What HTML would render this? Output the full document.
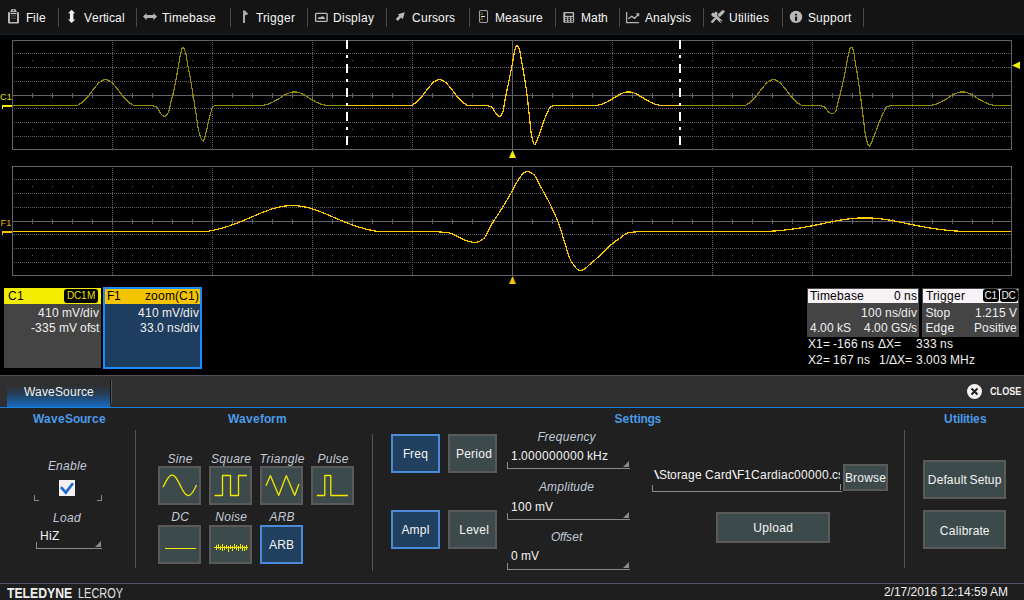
<!DOCTYPE html>
<html><head><meta charset="utf-8"><style>
*{margin:0;padding:0;box-sizing:border-box}
html,body{width:1024px;height:600px;overflow:hidden;background:#000;font-family:"Liberation Sans",sans-serif}
.a{position:absolute}
.t{position:absolute;white-space:nowrap}
i{font-style:inherit;display:inline-block}
.w1{width:1px}.w2{width:2px}.w3{width:3px}.w4{width:4px}.w5{width:5px}.w6{width:6px}.w7{width:7px}.w8{width:8px}.w9{width:9px}.w10{width:10px}.w11{width:11px}.w12{width:12px}.w13{width:13px}.w14{width:14px}.w15{width:15px}
</style></head><body>
<svg class="a" style="left:0;top:0" width="1024" height="290" viewBox="0 0 1024 290">
<g shape-rendering="crispEdges">
<line x1="13" y1="53.5" x2="1011" y2="53.5" stroke="#625f65" stroke-dasharray="1 1" stroke-dashoffset="1"/>
<line x1="13" y1="67.5" x2="1011" y2="67.5" stroke="#625f65" stroke-dasharray="1 1" stroke-dashoffset="1"/>
<line x1="13" y1="81.5" x2="1011" y2="81.5" stroke="#625f65" stroke-dasharray="1 1" stroke-dashoffset="1"/>
<line x1="13" y1="108.5" x2="1011" y2="108.5" stroke="#625f65" stroke-dasharray="1 1" stroke-dashoffset="1"/>
<line x1="13" y1="122.5" x2="1011" y2="122.5" stroke="#625f65" stroke-dasharray="1 1" stroke-dashoffset="1"/>
<line x1="13" y1="136.5" x2="1011" y2="136.5" stroke="#625f65" stroke-dasharray="1 1" stroke-dashoffset="1"/>
<line x1="112.5" y1="41" x2="112.5" y2="149" stroke="#625f65" stroke-dasharray="1 1" stroke-dashoffset="1"/>
<line x1="212.5" y1="41" x2="212.5" y2="149" stroke="#625f65" stroke-dasharray="1 1" stroke-dashoffset="1"/>
<line x1="312.5" y1="41" x2="312.5" y2="149" stroke="#625f65" stroke-dasharray="1 1" stroke-dashoffset="1"/>
<line x1="412.5" y1="41" x2="412.5" y2="149" stroke="#625f65" stroke-dasharray="1 1" stroke-dashoffset="1"/>
<line x1="612.5" y1="41" x2="612.5" y2="149" stroke="#625f65" stroke-dasharray="1 1" stroke-dashoffset="1"/>
<line x1="712.5" y1="41" x2="712.5" y2="149" stroke="#625f65" stroke-dasharray="1 1" stroke-dashoffset="1"/>
<line x1="812.5" y1="41" x2="812.5" y2="149" stroke="#625f65" stroke-dasharray="1 1" stroke-dashoffset="1"/>
<line x1="912.5" y1="41" x2="912.5" y2="149" stroke="#625f65" stroke-dasharray="1 1" stroke-dashoffset="1"/>
<path d="M32,60h1v1h-1zM52,60h1v1h-1zM72,60h1v1h-1zM92,60h1v1h-1zM132,60h1v1h-1zM152,60h1v1h-1zM172,60h1v1h-1zM192,60h1v1h-1zM232,60h1v1h-1zM252,60h1v1h-1zM272,60h1v1h-1zM292,60h1v1h-1zM332,60h1v1h-1zM352,60h1v1h-1zM372,60h1v1h-1zM392,60h1v1h-1zM432,60h1v1h-1zM452,60h1v1h-1zM472,60h1v1h-1zM492,60h1v1h-1zM532,60h1v1h-1zM552,60h1v1h-1zM572,60h1v1h-1zM592,60h1v1h-1zM632,60h1v1h-1zM652,60h1v1h-1zM672,60h1v1h-1zM692,60h1v1h-1zM732,60h1v1h-1zM752,60h1v1h-1zM772,60h1v1h-1zM792,60h1v1h-1zM832,60h1v1h-1zM852,60h1v1h-1zM872,60h1v1h-1zM892,60h1v1h-1zM932,60h1v1h-1zM952,60h1v1h-1zM972,60h1v1h-1zM992,60h1v1h-1zM32,129h1v1h-1zM52,129h1v1h-1zM72,129h1v1h-1zM92,129h1v1h-1zM132,129h1v1h-1zM152,129h1v1h-1zM172,129h1v1h-1zM192,129h1v1h-1zM232,129h1v1h-1zM252,129h1v1h-1zM272,129h1v1h-1zM292,129h1v1h-1zM332,129h1v1h-1zM352,129h1v1h-1zM372,129h1v1h-1zM392,129h1v1h-1zM432,129h1v1h-1zM452,129h1v1h-1zM472,129h1v1h-1zM492,129h1v1h-1zM532,129h1v1h-1zM552,129h1v1h-1zM572,129h1v1h-1zM592,129h1v1h-1zM632,129h1v1h-1zM652,129h1v1h-1zM672,129h1v1h-1zM692,129h1v1h-1zM732,129h1v1h-1zM752,129h1v1h-1zM772,129h1v1h-1zM792,129h1v1h-1zM832,129h1v1h-1zM852,129h1v1h-1zM872,129h1v1h-1zM892,129h1v1h-1zM932,129h1v1h-1zM952,129h1v1h-1zM972,129h1v1h-1zM992,129h1v1h-1z" fill="#625f65"/>
<line x1="13" y1="95.5" x2="1011" y2="95.5" stroke="#656266"/>
<line x1="512.5" y1="41" x2="512.5" y2="149" stroke="#656266"/>
<path d="M32.5,93v5M52.5,93v5M72.5,93v5M92.5,93v5M112.5,93v5M132.5,93v5M152.5,93v5M172.5,93v5M192.5,93v5M212.5,93v5M232.5,93v5M252.5,93v5M272.5,93v5M292.5,93v5M312.5,93v5M332.5,93v5M352.5,93v5M372.5,93v5M392.5,93v5M412.5,93v5M432.5,93v5M452.5,93v5M472.5,93v5M492.5,93v5M512.5,93v5M532.5,93v5M552.5,93v5M572.5,93v5M592.5,93v5M612.5,93v5M632.5,93v5M652.5,93v5M672.5,93v5M692.5,93v5M712.5,93v5M732.5,93v5M752.5,93v5M772.5,93v5M792.5,93v5M812.5,93v5M832.5,93v5M852.5,93v5M872.5,93v5M892.5,93v5M912.5,93v5M932.5,93v5M952.5,93v5M972.5,93v5M992.5,93v5" stroke="#656266"/>
<rect x="12.5" y="40.5" width="999" height="109" fill="none" stroke="#656266"/>
<line x1="13" y1="179.5" x2="1011" y2="179.5" stroke="#625f65" stroke-dasharray="1 1" stroke-dashoffset="1"/>
<line x1="13" y1="193.5" x2="1011" y2="193.5" stroke="#625f65" stroke-dasharray="1 1" stroke-dashoffset="1"/>
<line x1="13" y1="207.5" x2="1011" y2="207.5" stroke="#625f65" stroke-dasharray="1 1" stroke-dashoffset="1"/>
<line x1="13" y1="234.5" x2="1011" y2="234.5" stroke="#625f65" stroke-dasharray="1 1" stroke-dashoffset="1"/>
<line x1="13" y1="248.5" x2="1011" y2="248.5" stroke="#625f65" stroke-dasharray="1 1" stroke-dashoffset="1"/>
<line x1="13" y1="262.5" x2="1011" y2="262.5" stroke="#625f65" stroke-dasharray="1 1" stroke-dashoffset="1"/>
<line x1="112.5" y1="167" x2="112.5" y2="275" stroke="#625f65" stroke-dasharray="1 1" stroke-dashoffset="1"/>
<line x1="212.5" y1="167" x2="212.5" y2="275" stroke="#625f65" stroke-dasharray="1 1" stroke-dashoffset="1"/>
<line x1="312.5" y1="167" x2="312.5" y2="275" stroke="#625f65" stroke-dasharray="1 1" stroke-dashoffset="1"/>
<line x1="412.5" y1="167" x2="412.5" y2="275" stroke="#625f65" stroke-dasharray="1 1" stroke-dashoffset="1"/>
<line x1="612.5" y1="167" x2="612.5" y2="275" stroke="#625f65" stroke-dasharray="1 1" stroke-dashoffset="1"/>
<line x1="712.5" y1="167" x2="712.5" y2="275" stroke="#625f65" stroke-dasharray="1 1" stroke-dashoffset="1"/>
<line x1="812.5" y1="167" x2="812.5" y2="275" stroke="#625f65" stroke-dasharray="1 1" stroke-dashoffset="1"/>
<line x1="912.5" y1="167" x2="912.5" y2="275" stroke="#625f65" stroke-dasharray="1 1" stroke-dashoffset="1"/>
<path d="M32,186h1v1h-1zM52,186h1v1h-1zM72,186h1v1h-1zM92,186h1v1h-1zM132,186h1v1h-1zM152,186h1v1h-1zM172,186h1v1h-1zM192,186h1v1h-1zM232,186h1v1h-1zM252,186h1v1h-1zM272,186h1v1h-1zM292,186h1v1h-1zM332,186h1v1h-1zM352,186h1v1h-1zM372,186h1v1h-1zM392,186h1v1h-1zM432,186h1v1h-1zM452,186h1v1h-1zM472,186h1v1h-1zM492,186h1v1h-1zM532,186h1v1h-1zM552,186h1v1h-1zM572,186h1v1h-1zM592,186h1v1h-1zM632,186h1v1h-1zM652,186h1v1h-1zM672,186h1v1h-1zM692,186h1v1h-1zM732,186h1v1h-1zM752,186h1v1h-1zM772,186h1v1h-1zM792,186h1v1h-1zM832,186h1v1h-1zM852,186h1v1h-1zM872,186h1v1h-1zM892,186h1v1h-1zM932,186h1v1h-1zM952,186h1v1h-1zM972,186h1v1h-1zM992,186h1v1h-1zM32,255h1v1h-1zM52,255h1v1h-1zM72,255h1v1h-1zM92,255h1v1h-1zM132,255h1v1h-1zM152,255h1v1h-1zM172,255h1v1h-1zM192,255h1v1h-1zM232,255h1v1h-1zM252,255h1v1h-1zM272,255h1v1h-1zM292,255h1v1h-1zM332,255h1v1h-1zM352,255h1v1h-1zM372,255h1v1h-1zM392,255h1v1h-1zM432,255h1v1h-1zM452,255h1v1h-1zM472,255h1v1h-1zM492,255h1v1h-1zM532,255h1v1h-1zM552,255h1v1h-1zM572,255h1v1h-1zM592,255h1v1h-1zM632,255h1v1h-1zM652,255h1v1h-1zM672,255h1v1h-1zM692,255h1v1h-1zM732,255h1v1h-1zM752,255h1v1h-1zM772,255h1v1h-1zM792,255h1v1h-1zM832,255h1v1h-1zM852,255h1v1h-1zM872,255h1v1h-1zM892,255h1v1h-1zM932,255h1v1h-1zM952,255h1v1h-1zM972,255h1v1h-1zM992,255h1v1h-1z" fill="#625f65"/>
<line x1="13" y1="221.5" x2="1011" y2="221.5" stroke="#656266"/>
<line x1="512.5" y1="167" x2="512.5" y2="275" stroke="#656266"/>
<path d="M32.5,219v5M52.5,219v5M72.5,219v5M92.5,219v5M112.5,219v5M132.5,219v5M152.5,219v5M172.5,219v5M192.5,219v5M212.5,219v5M232.5,219v5M252.5,219v5M272.5,219v5M292.5,219v5M312.5,219v5M332.5,219v5M352.5,219v5M372.5,219v5M392.5,219v5M412.5,219v5M432.5,219v5M452.5,219v5M472.5,219v5M492.5,219v5M512.5,219v5M532.5,219v5M552.5,219v5M572.5,219v5M592.5,219v5M612.5,219v5M632.5,219v5M652.5,219v5M672.5,219v5M692.5,219v5M712.5,219v5M732.5,219v5M752.5,219v5M772.5,219v5M792.5,219v5M812.5,219v5M832.5,219v5M852.5,219v5M872.5,219v5M892.5,219v5M912.5,219v5M932.5,219v5M952.5,219v5M972.5,219v5M992.5,219v5" stroke="#656266"/>
<rect x="12.5" y="166.5" width="999" height="109" fill="none" stroke="#656266"/>
</g>
<path d="M13.0 105.4 13.5 105.4 14.0 105.4 14.5 105.4 15.0 105.4 15.5 105.4 16.0 105.4 16.5 105.4 17.0 105.4 17.5 105.4 18.0 105.4 18.5 105.4 19.0 105.4 19.5 105.4 20.0 105.4 20.5 105.4 21.0 105.4 21.5 105.4 22.0 105.4 22.5 105.4 23.0 105.4 23.5 105.4 24.0 105.4 24.5 105.4 25.0 105.4 25.5 105.4 26.0 105.4 26.5 105.4 27.0 105.4 27.5 105.4 28.0 105.4 28.5 105.4 29.0 105.4 29.5 105.4 30.0 105.4 30.5 105.4 31.0 105.4 31.5 105.4 32.0 105.4 32.5 105.4 33.0 105.4 33.5 105.4 34.0 105.4 34.5 105.4 35.0 105.4 35.5 105.4 36.0 105.4 36.5 105.4 37.0 105.4 37.5 105.4 38.0 105.4 38.5 105.4 39.0 105.4 39.5 105.4 40.0 105.4 40.5 105.4 41.0 105.4 41.5 105.4 42.0 105.4 42.5 105.4 43.0 105.4 43.5 105.4 44.0 105.4 44.5 105.4 45.0 105.4 45.5 105.4 46.0 105.4 46.5 105.4 47.0 105.4 47.5 105.4 48.0 105.4 48.5 105.4 49.0 105.4 49.5 105.4 50.0 105.4 50.5 105.4 51.0 105.4 51.5 105.4 52.0 105.4 52.5 105.4 53.0 105.4 53.5 105.4 54.0 105.4 54.5 105.4 55.0 105.4 55.5 105.4 56.0 105.4 56.5 105.4 57.0 105.4 57.5 105.4 58.0 105.4 58.5 105.4 59.0 105.4 59.5 105.4 60.0 105.4 60.5 105.4 61.0 105.4 61.5 105.4 62.0 105.4 62.5 105.4 63.0 105.4 63.5 105.4 64.0 105.4 64.5 105.4 65.0 105.4 65.5 105.4 66.0 105.4 66.5 105.4 67.0 105.4 67.5 105.4 68.0 105.4 68.5 105.4 69.0 105.4 69.5 105.4 70.0 105.4 70.5 105.4 71.0 105.4 71.5 105.4 72.0 105.4 72.5 105.4 73.0 105.4 73.5 105.4 74.0 105.4 74.5 105.4 75.0 105.4 75.5 105.4 76.0 105.4 76.5 105.4 77.0 105.4 77.5 105.4 78.0 105.1 78.5 104.8 79.0 104.5 79.5 104.2 80.0 103.9 80.5 103.5 81.0 103.2 81.5 102.8 82.0 102.4 82.5 102.0 83.0 101.5 83.5 101.1 84.0 100.6 84.5 100.1 85.0 99.6 85.5 99.1 86.0 98.5 86.5 98.0 87.0 97.4 87.5 96.8 88.0 96.2 88.5 95.6 89.0 95.0 89.5 94.3 90.0 93.7 90.5 93.0 91.0 92.4 91.5 91.7 92.0 91.1 92.5 90.4 93.0 89.8 93.5 89.1 94.0 88.5 94.5 87.8 95.0 87.2 95.5 86.6 96.0 86.0 96.5 85.4 97.0 84.9 97.5 84.3 98.0 83.8 98.5 83.3 99.0 82.8 99.5 82.3 100.0 81.9 100.5 81.5 101.0 81.2 101.5 80.9 102.0 80.6 102.5 80.3 103.0 80.1 103.5 79.9 104.0 79.8 104.5 79.7 105.0 79.6 105.5 79.6 106.0 79.6 106.5 79.7 107.0 79.8 107.5 79.9 108.0 80.1 108.5 80.3 109.0 80.6 109.5 80.9 110.0 81.2 110.5 81.5 111.0 81.9 111.5 82.3 112.0 82.8 112.5 83.3 113.0 83.8 113.5 84.3 114.0 84.9 114.5 85.4 115.0 86.0 115.5 86.6 116.0 87.2 116.5 87.8 117.0 88.5 117.5 89.1 118.0 89.8 118.5 90.4 119.0 91.1 119.5 91.7 120.0 92.4 120.5 93.0 121.0 93.7 121.5 94.3 122.0 95.0 122.5 95.6 123.0 96.2 123.5 96.8 124.0 97.4 124.5 98.0 125.0 98.5 125.5 99.1 126.0 99.6 126.5 100.1 127.0 100.6 127.5 101.1 128.0 101.5 128.5 102.0 129.0 102.4 129.5 102.8 130.0 103.2 130.5 103.5 131.0 103.9 131.5 104.2 132.0 104.5 132.5 104.8 133.0 105.1 133.5 105.4 134.0 105.4 134.5 105.4 135.0 105.4 135.5 105.4 136.0 105.4 136.5 105.4 137.0 105.4 137.5 105.4 138.0 105.4 138.5 105.4 139.0 105.4 139.5 105.4 140.0 105.4 140.5 105.4 141.0 105.4 141.5 105.4 142.0 105.4 142.5 105.4 143.0 105.4 143.5 105.4 144.0 105.4 144.5 105.4 145.0 105.4 145.5 105.4 146.0 105.4 146.5 105.4 147.0 105.5 147.5 105.5 148.0 105.5 148.5 105.5 149.0 105.5 149.5 105.5 150.0 105.5 150.5 105.5 151.0 105.5 151.5 105.6 152.0 105.7 152.5 105.7 153.0 105.8 153.5 106.0 154.0 106.1 154.5 106.3 155.0 106.4 155.5 106.6 156.0 106.8 156.5 107.1 157.0 107.5 157.5 108.2 158.0 108.9 158.5 109.7 159.0 110.6 159.5 111.5 160.0 112.4 160.5 113.2 161.0 113.9 161.5 114.5 162.0 114.9 162.5 115.4 163.0 115.8 163.5 116.2 164.0 116.4 164.5 116.5 165.0 116.4 165.5 116.1 166.0 115.6 166.5 115.0 167.0 114.4 167.5 113.7 168.0 112.9 168.5 111.9 169.0 110.4 169.5 108.6 170.0 106.5 170.5 104.3 171.0 102.0 171.5 99.8 172.0 97.9 172.5 96.1 173.0 94.2 173.5 91.7 174.0 89.3 174.5 86.9 175.0 84.4 175.5 81.9 176.0 79.3 176.5 76.7 177.0 74.0 177.5 71.3 178.0 68.5 178.5 65.8 179.0 62.9 179.5 59.8 180.0 56.9 180.5 54.3 181.0 52.2 181.5 50.2 182.0 48.7 182.5 48.0 183.0 47.8 183.5 48.1 184.0 48.8 184.5 49.7 185.0 50.9 185.5 52.4 186.0 54.7 186.5 57.6 187.0 60.6 187.5 63.5 188.0 66.2 188.5 68.8 189.0 71.4 189.5 74.0 190.0 76.7 190.5 79.5 191.0 82.5 191.5 85.5 192.0 88.6 192.5 91.9 193.0 95.0 193.5 97.8 194.0 100.7 194.5 103.9 195.0 107.1 195.5 110.4 196.0 113.6 196.5 116.8 197.0 120.2 197.5 123.8 198.0 127.2 198.5 130.0 199.0 132.0 199.5 133.6 200.0 135.2 200.5 136.6 201.0 137.9 201.5 139.0 202.0 139.9 202.5 140.5 203.0 140.9 203.5 140.9 204.0 139.9 204.5 138.2 205.0 136.2 205.5 134.4 206.0 132.5 206.5 130.4 207.0 128.3 207.5 126.1 208.0 123.8 208.5 121.5 209.0 119.3 209.5 117.4 210.0 115.5 210.5 113.8 211.0 112.1 211.5 110.3 212.0 108.4 212.5 107.1 213.0 106.6 213.5 106.2 214.0 106.0 214.5 105.8 215.0 105.7 215.5 105.6 216.0 105.5 216.5 105.5 217.0 105.4 217.5 105.4 218.0 105.4 218.5 105.4 219.0 105.4 219.5 105.4 220.0 105.4 220.5 105.4 221.0 105.4 221.5 105.4 222.0 105.4 222.5 105.4 223.0 105.4 223.5 105.4 224.0 105.4 224.5 105.4 225.0 105.4 225.5 105.4 226.0 105.4 226.5 105.4 227.0 105.4 227.5 105.4 228.0 105.4 228.5 105.4 229.0 105.4 229.5 105.4 230.0 105.4 230.5 105.4 231.0 105.4 231.5 105.4 232.0 105.4 232.5 105.4 233.0 105.4 233.5 105.4 234.0 105.4 234.5 105.4 235.0 105.4 235.5 105.4 236.0 105.4 236.5 105.4 237.0 105.4 237.5 105.4 238.0 105.4 238.5 105.4 239.0 105.4 239.5 105.4 240.0 105.4 240.5 105.4 241.0 105.4 241.5 105.4 242.0 105.4 242.5 105.4 243.0 105.4 243.5 105.4 244.0 105.4 244.5 105.4 245.0 105.4 245.5 105.4 246.0 105.4 246.5 105.4 247.0 105.4 247.5 105.4 248.0 105.4 248.5 105.4 249.0 105.4 249.5 105.4 250.0 105.4 250.5 105.4 251.0 105.4 251.5 105.4 252.0 105.4 252.5 105.4 253.0 105.4 253.5 105.4 254.0 105.4 254.5 105.4 255.0 105.4 255.5 105.4 256.0 105.4 256.5 105.4 257.0 105.4 257.5 105.4 258.0 105.4 258.5 105.4 259.0 105.4 259.5 105.4 260.0 105.4 260.5 105.4 261.0 105.4 261.5 105.4 262.0 105.4 262.5 105.4 263.0 105.3 263.5 105.2 264.0 105.1 264.5 105.0 265.0 104.9 265.5 104.8 266.0 104.6 266.5 104.5 267.0 104.4 267.5 104.2 268.0 104.0 268.5 103.9 269.0 103.7 269.5 103.5 270.0 103.3 270.5 103.1 271.0 102.9 271.5 102.7 272.0 102.5 272.5 102.2 273.0 102.0 273.5 101.7 274.0 101.5 274.5 101.2 275.0 100.9 275.5 100.7 276.0 100.4 276.5 100.1 277.0 99.8 277.5 99.5 278.0 99.2 278.5 98.9 279.0 98.6 279.5 98.3 280.0 97.9 280.5 97.6 281.0 97.3 281.5 97.0 282.0 96.7 282.5 96.4 283.0 96.1 283.5 95.8 284.0 95.5 284.5 95.2 285.0 94.9 285.5 94.6 286.0 94.4 286.5 94.1 287.0 93.8 287.5 93.6 288.0 93.4 288.5 93.2 289.0 93.0 289.5 92.8 290.0 92.6 290.5 92.5 291.0 92.3 291.5 92.2 292.0 92.1 292.5 92.0 293.0 92.0 293.5 91.9 294.0 91.9 294.5 91.9 295.0 91.9 295.5 91.9 296.0 92.0 296.5 92.0 297.0 92.1 297.5 92.2 298.0 92.3 298.5 92.5 299.0 92.6 299.5 92.8 300.0 93.0 300.5 93.2 301.0 93.4 301.5 93.6 302.0 93.8 302.5 94.1 303.0 94.4 303.5 94.6 304.0 94.9 304.5 95.2 305.0 95.5 305.5 95.8 306.0 96.1 306.5 96.4 307.0 96.7 307.5 97.0 308.0 97.3 308.5 97.6 309.0 97.9 309.5 98.3 310.0 98.6 310.5 98.9 311.0 99.2 311.5 99.5 312.0 99.8 312.5 100.1 313.0 100.4 313.5 100.7 314.0 100.9 314.5 101.2 315.0 101.5 315.5 101.7 316.0 102.0 316.5 102.2 317.0 102.5 317.5 102.7 318.0 102.9 318.5 103.1 319.0 103.3 319.5 103.5 320.0 103.7 320.5 103.9 321.0 104.0 321.5 104.2 322.0 104.4 322.5 104.5 323.0 104.6 323.5 104.8 324.0 104.9 324.5 105.0 325.0 105.1 325.5 105.2 326.0 105.3 326.5 105.4 327.0 105.4 327.5 105.4 328.0 105.4 328.5 105.4 329.0 105.4 329.5 105.4 330.0 105.4 330.5 105.4 331.0 105.4 331.5 105.4 332.0 105.4 332.5 105.4 333.0 105.4 333.5 105.4 334.0 105.4 334.5 105.4 335.0 105.4 335.5 105.4 336.0 105.4 336.5 105.4 337.0 105.4 337.5 105.4 338.0 105.4 338.5 105.4 339.0 105.4 339.5 105.4 340.0 105.4 340.5 105.4 341.0 105.4 341.5 105.4 342.0 105.4 342.5 105.4 343.0 105.4 343.5 105.4 344.0 105.4 344.5 105.4 345.0 105.4 345.5 105.4 346.0 105.4 346.5 105.4 347.0 105.4" fill="none" stroke="#938b00" stroke-width="1.2" shape-rendering="crispEdges"/>
<path d="M679.0 105.4 679.5 105.4 680.0 105.4 680.5 105.4 681.0 105.4 681.5 105.4 682.0 105.4 682.5 105.4 683.0 105.4 683.5 105.4 684.0 105.4 684.5 105.4 685.0 105.4 685.5 105.4 686.0 105.4 686.5 105.4 687.0 105.4 687.5 105.4 688.0 105.4 688.5 105.4 689.0 105.4 689.5 105.4 690.0 105.4 690.5 105.4 691.0 105.4 691.5 105.4 692.0 105.4 692.5 105.4 693.0 105.4 693.5 105.4 694.0 105.4 694.5 105.4 695.0 105.4 695.5 105.4 696.0 105.4 696.5 105.4 697.0 105.4 697.5 105.4 698.0 105.4 698.5 105.4 699.0 105.4 699.5 105.4 700.0 105.4 700.5 105.4 701.0 105.4 701.5 105.4 702.0 105.4 702.5 105.4 703.0 105.4 703.5 105.4 704.0 105.4 704.5 105.4 705.0 105.4 705.5 105.4 706.0 105.4 706.5 105.4 707.0 105.4 707.5 105.4 708.0 105.4 708.5 105.4 709.0 105.4 709.5 105.4 710.0 105.4 710.5 105.4 711.0 105.4 711.5 105.4 712.0 105.4 712.5 105.4 713.0 105.4 713.5 105.4 714.0 105.4 714.5 105.4 715.0 105.4 715.5 105.4 716.0 105.4 716.5 105.4 717.0 105.4 717.5 105.4 718.0 105.4 718.5 105.4 719.0 105.4 719.5 105.4 720.0 105.4 720.5 105.4 721.0 105.4 721.5 105.4 722.0 105.4 722.5 105.4 723.0 105.4 723.5 105.4 724.0 105.4 724.5 105.4 725.0 105.4 725.5 105.4 726.0 105.4 726.5 105.4 727.0 105.4 727.5 105.4 728.0 105.4 728.5 105.4 729.0 105.4 729.5 105.4 730.0 105.4 730.5 105.4 731.0 105.4 731.5 105.4 732.0 105.4 732.5 105.4 733.0 105.4 733.5 105.4 734.0 105.4 734.5 105.4 735.0 105.4 735.5 105.4 736.0 105.4 736.5 105.4 737.0 105.4 737.5 105.4 738.0 105.4 738.5 105.4 739.0 105.4 739.5 105.4 740.0 105.4 740.5 105.4 741.0 105.4 741.5 105.4 742.0 105.4 742.5 105.4 743.0 105.4 743.5 105.4 744.0 105.4 744.5 105.4 745.0 105.4 745.5 105.4 746.0 105.1 746.5 104.8 747.0 104.5 747.5 104.2 748.0 103.9 748.5 103.5 749.0 103.2 749.5 102.8 750.0 102.4 750.5 102.0 751.0 101.5 751.5 101.1 752.0 100.6 752.5 100.1 753.0 99.6 753.5 99.1 754.0 98.5 754.5 98.0 755.0 97.4 755.5 96.8 756.0 96.2 756.5 95.6 757.0 95.0 757.5 94.3 758.0 93.7 758.5 93.0 759.0 92.4 759.5 91.7 760.0 91.1 760.5 90.4 761.0 89.8 761.5 89.1 762.0 88.5 762.5 87.8 763.0 87.2 763.5 86.6 764.0 86.0 764.5 85.4 765.0 84.9 765.5 84.3 766.0 83.8 766.5 83.3 767.0 82.8 767.5 82.3 768.0 81.9 768.5 81.5 769.0 81.2 769.5 80.9 770.0 80.6 770.5 80.3 771.0 80.1 771.5 79.9 772.0 79.8 772.5 79.7 773.0 79.6 773.5 79.6 774.0 79.6 774.5 79.7 775.0 79.8 775.5 79.9 776.0 80.1 776.5 80.3 777.0 80.6 777.5 80.9 778.0 81.2 778.5 81.5 779.0 81.9 779.5 82.3 780.0 82.8 780.5 83.3 781.0 83.8 781.5 84.3 782.0 84.9 782.5 85.4 783.0 86.0 783.5 86.6 784.0 87.2 784.5 87.8 785.0 88.5 785.5 89.1 786.0 89.8 786.5 90.4 787.0 91.1 787.5 91.7 788.0 92.4 788.5 93.0 789.0 93.7 789.5 94.3 790.0 95.0 790.5 95.6 791.0 96.2 791.5 96.8 792.0 97.4 792.5 98.0 793.0 98.5 793.5 99.1 794.0 99.6 794.5 100.1 795.0 100.6 795.5 101.1 796.0 101.5 796.5 102.0 797.0 102.4 797.5 102.8 798.0 103.2 798.5 103.5 799.0 103.9 799.5 104.2 800.0 104.5 800.5 104.8 801.0 105.1 801.5 105.4 802.0 105.4 802.5 105.4 803.0 105.4 803.5 105.4 804.0 105.4 804.5 105.4 805.0 105.4 805.5 105.4 806.0 105.4 806.5 105.4 807.0 105.4 807.5 105.4 808.0 105.4 808.5 105.4 809.0 105.4 809.5 105.4 810.0 105.4 810.5 105.4 811.0 105.4 811.5 105.4 812.0 105.4 812.5 105.4 813.0 105.4 813.5 105.4 814.0 105.4 814.5 105.4 815.0 105.4 815.5 105.5 816.0 105.5 816.5 105.5 817.0 105.5 817.5 105.5 818.0 105.5 818.5 105.5 819.0 105.5 819.5 105.6 820.0 105.7 820.5 105.7 821.0 105.8 821.5 105.9 822.0 106.1 822.5 106.2 823.0 106.3 823.5 106.5 824.0 106.7 824.5 107.0 825.0 107.4 825.5 108.0 826.0 108.6 826.5 109.3 827.0 110.0 827.5 110.7 828.0 111.3 828.5 111.9 829.0 112.3 829.5 112.7 830.0 113.0 830.5 113.3 831.0 113.5 831.5 113.7 832.0 113.7 832.5 113.8 833.0 113.6 833.5 113.4 834.0 113.0 834.5 112.5 835.0 112.0 835.5 111.3 836.0 110.3 836.5 108.8 837.0 106.9 837.5 104.8 838.0 102.6 838.5 100.5 839.0 98.4 839.5 96.6 840.0 94.6 840.5 92.6 841.0 90.5 841.5 88.4 842.0 86.3 842.5 84.1 843.0 81.9 843.5 79.6 844.0 77.2 844.5 74.8 845.0 72.3 845.5 69.8 846.0 67.3 846.5 64.7 847.0 61.9 847.5 59.1 848.0 56.5 848.5 54.2 849.0 52.2 849.5 50.2 850.0 48.7 850.5 47.8 851.0 47.3 851.5 47.2 852.0 47.6 852.5 48.5 853.0 49.5 853.5 51.1 854.0 53.7 854.5 56.9 855.0 60.2 855.5 63.3 856.0 66.2 856.5 69.1 857.0 72.0 857.5 75.1 858.0 78.4 858.5 81.8 859.0 85.3 859.5 89.1 860.0 93.1 860.5 96.3 861.0 99.9 861.5 103.7 862.0 107.7 862.5 111.7 863.0 115.8 863.5 119.8 864.0 124.3 864.5 128.7 865.0 132.5 865.5 135.1 866.0 137.3 866.5 139.3 867.0 141.2 867.5 142.8 868.0 144.2 868.5 145.2 869.0 145.8 869.5 145.9 870.0 145.5 870.5 144.8 871.0 143.7 871.5 142.5 872.0 141.2 872.5 140.0 873.0 138.7 873.5 137.6 874.0 136.4 874.5 135.1 875.0 133.8 875.5 132.5 876.0 131.1 876.5 129.8 877.0 128.4 877.5 127.0 878.0 125.6 878.5 124.2 879.0 122.8 879.5 121.5 880.0 120.2 880.5 119.0 881.0 117.9 881.5 116.8 882.0 115.8 882.5 114.8 883.0 113.8 883.5 112.8 884.0 111.9 884.5 110.8 885.0 109.8 885.5 108.7 886.0 107.8 886.5 107.1 887.0 106.8 887.5 106.6 888.0 106.4 888.5 106.2 889.0 106.1 889.5 105.9 890.0 105.8 890.5 105.6 891.0 105.5 891.5 105.5 892.0 105.4 892.5 105.4 893.0 105.4 893.5 105.4 894.0 105.4 894.5 105.4 895.0 105.4 895.5 105.4 896.0 105.4 896.5 105.4 897.0 105.4 897.5 105.4 898.0 105.4 898.5 105.4 899.0 105.4 899.5 105.4 900.0 105.4 900.5 105.4 901.0 105.4 901.5 105.4 902.0 105.4 902.5 105.4 903.0 105.4 903.5 105.4 904.0 105.4 904.5 105.4 905.0 105.4 905.5 105.4 906.0 105.4 906.5 105.4 907.0 105.4 907.5 105.4 908.0 105.4 908.5 105.4 909.0 105.4 909.5 105.4 910.0 105.4 910.5 105.4 911.0 105.4 911.5 105.4 912.0 105.4 912.5 105.4 913.0 105.4 913.5 105.4 914.0 105.4 914.5 105.4 915.0 105.4 915.5 105.4 916.0 105.4 916.5 105.4 917.0 105.4 917.5 105.4 918.0 105.4 918.5 105.4 919.0 105.4 919.5 105.4 920.0 105.4 920.5 105.4 921.0 105.4 921.5 105.4 922.0 105.4 922.5 105.4 923.0 105.4 923.5 105.4 924.0 105.4 924.5 105.4 925.0 105.4 925.5 105.4 926.0 105.4 926.5 105.4 927.0 105.4 927.5 105.4 928.0 105.4 928.5 105.4 929.0 105.4 929.5 105.4 930.0 105.4 930.5 105.4 931.0 105.3 931.5 105.2 932.0 105.1 932.5 105.0 933.0 104.9 933.5 104.8 934.0 104.6 934.5 104.5 935.0 104.4 935.5 104.2 936.0 104.0 936.5 103.9 937.0 103.7 937.5 103.5 938.0 103.3 938.5 103.1 939.0 102.9 939.5 102.7 940.0 102.5 940.5 102.2 941.0 102.0 941.5 101.7 942.0 101.5 942.5 101.2 943.0 100.9 943.5 100.7 944.0 100.4 944.5 100.1 945.0 99.8 945.5 99.5 946.0 99.2 946.5 98.9 947.0 98.6 947.5 98.3 948.0 97.9 948.5 97.6 949.0 97.3 949.5 97.0 950.0 96.7 950.5 96.4 951.0 96.1 951.5 95.8 952.0 95.5 952.5 95.2 953.0 94.9 953.5 94.6 954.0 94.4 954.5 94.1 955.0 93.8 955.5 93.6 956.0 93.4 956.5 93.2 957.0 93.0 957.5 92.8 958.0 92.6 958.5 92.5 959.0 92.3 959.5 92.2 960.0 92.1 960.5 92.0 961.0 92.0 961.5 91.9 962.0 91.9 962.5 91.9 963.0 91.9 963.5 91.9 964.0 92.0 964.5 92.0 965.0 92.1 965.5 92.2 966.0 92.3 966.5 92.5 967.0 92.6 967.5 92.8 968.0 93.0 968.5 93.2 969.0 93.4 969.5 93.6 970.0 93.8 970.5 94.1 971.0 94.4 971.5 94.6 972.0 94.9 972.5 95.2 973.0 95.5 973.5 95.8 974.0 96.1 974.5 96.4 975.0 96.7 975.5 97.0 976.0 97.3 976.5 97.6 977.0 97.9 977.5 98.3 978.0 98.6 978.5 98.9 979.0 99.2 979.5 99.5 980.0 99.8 980.5 100.1 981.0 100.4 981.5 100.7 982.0 100.9 982.5 101.2 983.0 101.5 983.5 101.7 984.0 102.0 984.5 102.2 985.0 102.5 985.5 102.7 986.0 102.9 986.5 103.1 987.0 103.3 987.5 103.5 988.0 103.7 988.5 103.9 989.0 104.0 989.5 104.2 990.0 104.4 990.5 104.5 991.0 104.6 991.5 104.8 992.0 104.9 992.5 105.0 993.0 105.1 993.5 105.2 994.0 105.3 994.5 105.4 995.0 105.4 995.5 105.4 996.0 105.4 996.5 105.4 997.0 105.4 997.5 105.4 998.0 105.4 998.5 105.4 999.0 105.4 999.5 105.4 1000.0 105.4 1000.5 105.4 1001.0 105.4 1001.5 105.4 1002.0 105.4 1002.5 105.4 1003.0 105.4 1003.5 105.4 1004.0 105.4 1004.5 105.4 1005.0 105.4 1005.5 105.4 1006.0 105.4 1006.5 105.4 1007.0 105.4 1007.5 105.4 1008.0 105.4 1008.5 105.4 1009.0 105.4 1009.5 105.4 1010.0 105.4 1010.5 105.4 1011.0 105.4" fill="none" stroke="#938b00" stroke-width="1.2" shape-rendering="crispEdges"/>
<path d="M347.0 105.4 347.5 105.4 348.0 105.4 348.5 105.4 349.0 105.4 349.5 105.4 350.0 105.4 350.5 105.4 351.0 105.4 351.5 105.4 352.0 105.4 352.5 105.4 353.0 105.4 353.5 105.4 354.0 105.4 354.5 105.4 355.0 105.4 355.5 105.4 356.0 105.4 356.5 105.4 357.0 105.4 357.5 105.4 358.0 105.4 358.5 105.4 359.0 105.4 359.5 105.4 360.0 105.4 360.5 105.4 361.0 105.4 361.5 105.4 362.0 105.4 362.5 105.4 363.0 105.4 363.5 105.4 364.0 105.4 364.5 105.4 365.0 105.4 365.5 105.4 366.0 105.4 366.5 105.4 367.0 105.4 367.5 105.4 368.0 105.4 368.5 105.4 369.0 105.4 369.5 105.4 370.0 105.4 370.5 105.4 371.0 105.4 371.5 105.4 372.0 105.4 372.5 105.4 373.0 105.4 373.5 105.4 374.0 105.4 374.5 105.4 375.0 105.4 375.5 105.4 376.0 105.4 376.5 105.4 377.0 105.4 377.5 105.4 378.0 105.4 378.5 105.4 379.0 105.4 379.5 105.4 380.0 105.4 380.5 105.4 381.0 105.4 381.5 105.4 382.0 105.4 382.5 105.4 383.0 105.4 383.5 105.4 384.0 105.4 384.5 105.4 385.0 105.4 385.5 105.4 386.0 105.4 386.5 105.4 387.0 105.4 387.5 105.4 388.0 105.4 388.5 105.4 389.0 105.4 389.5 105.4 390.0 105.4 390.5 105.4 391.0 105.4 391.5 105.4 392.0 105.4 392.5 105.4 393.0 105.4 393.5 105.4 394.0 105.4 394.5 105.4 395.0 105.4 395.5 105.4 396.0 105.4 396.5 105.4 397.0 105.4 397.5 105.4 398.0 105.4 398.5 105.4 399.0 105.4 399.5 105.4 400.0 105.4 400.5 105.4 401.0 105.4 401.5 105.4 402.0 105.4 402.5 105.4 403.0 105.4 403.5 105.4 404.0 105.4 404.5 105.4 405.0 105.4 405.5 105.4 406.0 105.4 406.5 105.4 407.0 105.4 407.5 105.4 408.0 105.4 408.5 105.4 409.0 105.4 409.5 105.4 410.0 105.4 410.5 105.4 411.0 105.4 411.5 105.4 412.0 105.1 412.5 104.8 413.0 104.5 413.5 104.2 414.0 103.9 414.5 103.5 415.0 103.2 415.5 102.8 416.0 102.4 416.5 102.0 417.0 101.5 417.5 101.1 418.0 100.6 418.5 100.1 419.0 99.6 419.5 99.1 420.0 98.5 420.5 98.0 421.0 97.4 421.5 96.8 422.0 96.2 422.5 95.6 423.0 95.0 423.5 94.3 424.0 93.7 424.5 93.0 425.0 92.4 425.5 91.7 426.0 91.1 426.5 90.4 427.0 89.8 427.5 89.1 428.0 88.5 428.5 87.8 429.0 87.2 429.5 86.6 430.0 86.0 430.5 85.4 431.0 84.9 431.5 84.3 432.0 83.8 432.5 83.3 433.0 82.8 433.5 82.3 434.0 81.9 434.5 81.5 435.0 81.2 435.5 80.9 436.0 80.6 436.5 80.3 437.0 80.1 437.5 79.9 438.0 79.8 438.5 79.7 439.0 79.6 439.5 79.6 440.0 79.6 440.5 79.7 441.0 79.8 441.5 79.9 442.0 80.1 442.5 80.3 443.0 80.6 443.5 80.9 444.0 81.2 444.5 81.5 445.0 81.9 445.5 82.3 446.0 82.8 446.5 83.3 447.0 83.8 447.5 84.3 448.0 84.9 448.5 85.4 449.0 86.0 449.5 86.6 450.0 87.2 450.5 87.8 451.0 88.5 451.5 89.1 452.0 89.8 452.5 90.4 453.0 91.1 453.5 91.7 454.0 92.4 454.5 93.0 455.0 93.7 455.5 94.3 456.0 95.0 456.5 95.6 457.0 96.2 457.5 96.8 458.0 97.4 458.5 98.0 459.0 98.5 459.5 99.1 460.0 99.6 460.5 100.1 461.0 100.6 461.5 101.1 462.0 101.5 462.5 102.0 463.0 102.4 463.5 102.8 464.0 103.2 464.5 103.5 465.0 103.9 465.5 104.2 466.0 104.5 466.5 104.8 467.0 105.1 467.5 105.4 468.0 105.4 468.5 105.4 469.0 105.4 469.5 105.4 470.0 105.4 470.5 105.4 471.0 105.4 471.5 105.4 472.0 105.4 472.5 105.4 473.0 105.4 473.5 105.4 474.0 105.4 474.5 105.4 475.0 105.4 475.5 105.4 476.0 105.4 476.5 105.4 477.0 105.4 477.5 105.4 478.0 105.4 478.5 105.4 479.0 105.4 479.5 105.4 480.0 105.4 480.5 105.4 481.0 105.4 481.5 105.5 482.0 105.5 482.5 105.5 483.0 105.5 483.5 105.5 484.0 105.5 484.5 105.5 485.0 105.5 485.5 105.5 486.0 105.6 486.5 105.6 487.0 105.7 487.5 105.8 488.0 105.9 488.5 106.0 489.0 106.1 489.5 106.3 490.0 106.5 490.5 106.6 491.0 106.8 491.5 107.1 492.0 107.5 492.5 108.1 493.0 108.8 493.5 109.6 494.0 110.4 494.5 111.2 495.0 112.1 495.5 112.9 496.0 113.6 496.5 114.2 497.0 114.7 497.5 115.1 498.0 115.6 498.5 116.0 499.0 116.3 499.5 116.5 500.0 116.5 500.5 116.2 501.0 115.6 501.5 114.8 502.0 113.9 502.5 112.9 503.0 111.4 503.5 109.0 504.0 106.2 504.5 103.1 505.0 100.0 505.5 97.3 506.0 94.9 506.5 92.5 507.0 90.2 507.5 87.9 508.0 85.5 508.5 83.2 509.0 80.8 509.5 78.3 510.0 75.8 510.5 73.2 511.0 70.6 511.5 68.0 512.0 65.4 512.5 62.7 513.0 59.8 513.5 56.8 514.0 54.1 514.5 51.8 515.0 49.8 515.5 47.9 516.0 46.5 516.5 45.8 517.0 45.6 517.5 45.8 518.0 46.3 518.5 47.2 519.0 48.2 519.5 49.6 520.0 51.9 520.5 54.8 521.0 57.9 521.5 60.9 522.0 63.7 522.5 66.4 523.0 69.1 523.5 71.9 524.0 74.7 524.5 77.7 525.0 80.8 525.5 84.0 526.0 87.3 526.5 90.9 527.0 94.6 527.5 98.7 528.0 103.2 528.5 107.9 529.0 112.7 529.5 117.4 530.0 122.4 530.5 127.7 531.0 132.1 531.5 135.0 532.0 137.4 532.5 139.6 533.0 141.5 533.5 143.1 534.0 144.1 534.5 144.6 535.0 144.4 535.5 143.8 536.0 142.8 536.5 141.6 537.0 140.2 537.5 138.9 538.0 137.6 538.5 136.4 539.0 135.1 539.5 133.7 540.0 132.3 540.5 130.8 541.0 129.4 541.5 127.9 542.0 126.4 542.5 124.9 543.0 123.4 543.5 121.9 544.0 120.5 544.5 119.2 545.0 118.0 545.5 116.8 546.0 115.6 546.5 114.5 547.0 113.5 547.5 112.4 548.0 111.3 548.5 110.2 549.0 109.0 549.5 107.9 550.0 107.1 550.5 106.8 551.0 106.5 551.5 106.3 552.0 106.1 552.5 106.0 553.0 105.8 553.5 105.7 554.0 105.6 554.5 105.5 555.0 105.5 555.5 105.4 556.0 105.4 556.5 105.4 557.0 105.4 557.5 105.4 558.0 105.4 558.5 105.4 559.0 105.4 559.5 105.4 560.0 105.4 560.5 105.4 561.0 105.4 561.5 105.4 562.0 105.4 562.5 105.4 563.0 105.4 563.5 105.4 564.0 105.4 564.5 105.4 565.0 105.4 565.5 105.4 566.0 105.4 566.5 105.4 567.0 105.4 567.5 105.4 568.0 105.4 568.5 105.4 569.0 105.4 569.5 105.4 570.0 105.4 570.5 105.4 571.0 105.4 571.5 105.4 572.0 105.4 572.5 105.4 573.0 105.4 573.5 105.4 574.0 105.4 574.5 105.4 575.0 105.4 575.5 105.4 576.0 105.4 576.5 105.4 577.0 105.4 577.5 105.4 578.0 105.4 578.5 105.4 579.0 105.4 579.5 105.4 580.0 105.4 580.5 105.4 581.0 105.4 581.5 105.4 582.0 105.4 582.5 105.4 583.0 105.4 583.5 105.4 584.0 105.4 584.5 105.4 585.0 105.4 585.5 105.4 586.0 105.4 586.5 105.4 587.0 105.4 587.5 105.4 588.0 105.4 588.5 105.4 589.0 105.4 589.5 105.4 590.0 105.4 590.5 105.4 591.0 105.4 591.5 105.4 592.0 105.4 592.5 105.4 593.0 105.4 593.5 105.4 594.0 105.4 594.5 105.4 595.0 105.4 595.5 105.4 596.0 105.4 596.5 105.4 597.0 105.3 597.5 105.2 598.0 105.1 598.5 105.0 599.0 104.9 599.5 104.8 600.0 104.6 600.5 104.5 601.0 104.4 601.5 104.2 602.0 104.0 602.5 103.9 603.0 103.7 603.5 103.5 604.0 103.3 604.5 103.1 605.0 102.9 605.5 102.7 606.0 102.5 606.5 102.2 607.0 102.0 607.5 101.7 608.0 101.5 608.5 101.2 609.0 100.9 609.5 100.7 610.0 100.4 610.5 100.1 611.0 99.8 611.5 99.5 612.0 99.2 612.5 98.9 613.0 98.6 613.5 98.3 614.0 97.9 614.5 97.6 615.0 97.3 615.5 97.0 616.0 96.7 616.5 96.4 617.0 96.1 617.5 95.8 618.0 95.5 618.5 95.2 619.0 94.9 619.5 94.6 620.0 94.4 620.5 94.1 621.0 93.8 621.5 93.6 622.0 93.4 622.5 93.2 623.0 93.0 623.5 92.8 624.0 92.6 624.5 92.5 625.0 92.3 625.5 92.2 626.0 92.1 626.5 92.0 627.0 92.0 627.5 91.9 628.0 91.9 628.5 91.9 629.0 91.9 629.5 91.9 630.0 92.0 630.5 92.0 631.0 92.1 631.5 92.2 632.0 92.3 632.5 92.5 633.0 92.6 633.5 92.8 634.0 93.0 634.5 93.2 635.0 93.4 635.5 93.6 636.0 93.8 636.5 94.1 637.0 94.4 637.5 94.6 638.0 94.9 638.5 95.2 639.0 95.5 639.5 95.8 640.0 96.1 640.5 96.4 641.0 96.7 641.5 97.0 642.0 97.3 642.5 97.6 643.0 97.9 643.5 98.3 644.0 98.6 644.5 98.9 645.0 99.2 645.5 99.5 646.0 99.8 646.5 100.1 647.0 100.4 647.5 100.7 648.0 100.9 648.5 101.2 649.0 101.5 649.5 101.7 650.0 102.0 650.5 102.2 651.0 102.5 651.5 102.7 652.0 102.9 652.5 103.1 653.0 103.3 653.5 103.5 654.0 103.7 654.5 103.9 655.0 104.0 655.5 104.2 656.0 104.4 656.5 104.5 657.0 104.6 657.5 104.8 658.0 104.9 658.5 105.0 659.0 105.1 659.5 105.2 660.0 105.3 660.5 105.4 661.0 105.4 661.5 105.4 662.0 105.4 662.5 105.4 663.0 105.4 663.5 105.4 664.0 105.4 664.5 105.4 665.0 105.4 665.5 105.4 666.0 105.4 666.5 105.4 667.0 105.4 667.5 105.4 668.0 105.4 668.5 105.4 669.0 105.4 669.5 105.4 670.0 105.4 670.5 105.4 671.0 105.4 671.5 105.4 672.0 105.4 672.5 105.4 673.0 105.4 673.5 105.4 674.0 105.4 674.5 105.4 675.0 105.4 675.5 105.4 676.0 105.4 676.5 105.4 677.0 105.4 677.5 105.4 678.0 105.4 678.5 105.4 679.0 105.4" fill="none" stroke="#ffc800" stroke-width="1.25" shape-rendering="crispEdges"/>
<path d="M13.0 231.4 13.5 231.4 14.0 231.4 14.5 231.4 15.0 231.4 15.5 231.4 16.0 231.4 16.5 231.4 17.0 231.4 17.5 231.4 18.0 231.4 18.5 231.4 19.0 231.4 19.5 231.4 20.0 231.4 20.5 231.4 21.0 231.4 21.5 231.4 22.0 231.4 22.5 231.4 23.0 231.4 23.5 231.4 24.0 231.4 24.5 231.4 25.0 231.4 25.5 231.4 26.0 231.4 26.5 231.4 27.0 231.4 27.5 231.4 28.0 231.4 28.5 231.4 29.0 231.4 29.5 231.4 30.0 231.4 30.5 231.4 31.0 231.4 31.5 231.4 32.0 231.4 32.5 231.4 33.0 231.4 33.5 231.4 34.0 231.4 34.5 231.4 35.0 231.4 35.5 231.4 36.0 231.4 36.5 231.4 37.0 231.4 37.5 231.4 38.0 231.4 38.5 231.4 39.0 231.4 39.5 231.4 40.0 231.4 40.5 231.4 41.0 231.4 41.5 231.4 42.0 231.4 42.5 231.4 43.0 231.4 43.5 231.4 44.0 231.4 44.5 231.4 45.0 231.4 45.5 231.4 46.0 231.4 46.5 231.4 47.0 231.4 47.5 231.4 48.0 231.4 48.5 231.4 49.0 231.4 49.5 231.4 50.0 231.4 50.5 231.4 51.0 231.4 51.5 231.4 52.0 231.4 52.5 231.4 53.0 231.4 53.5 231.4 54.0 231.4 54.5 231.4 55.0 231.4 55.5 231.4 56.0 231.4 56.5 231.4 57.0 231.4 57.5 231.4 58.0 231.4 58.5 231.4 59.0 231.4 59.5 231.4 60.0 231.4 60.5 231.4 61.0 231.4 61.5 231.4 62.0 231.4 62.5 231.4 63.0 231.4 63.5 231.4 64.0 231.4 64.5 231.4 65.0 231.4 65.5 231.4 66.0 231.4 66.5 231.4 67.0 231.4 67.5 231.4 68.0 231.4 68.5 231.4 69.0 231.4 69.5 231.4 70.0 231.4 70.5 231.4 71.0 231.4 71.5 231.4 72.0 231.4 72.5 231.4 73.0 231.4 73.5 231.4 74.0 231.4 74.5 231.4 75.0 231.4 75.5 231.4 76.0 231.4 76.5 231.4 77.0 231.4 77.5 231.4 78.0 231.4 78.5 231.4 79.0 231.4 79.5 231.4 80.0 231.4 80.5 231.4 81.0 231.4 81.5 231.4 82.0 231.4 82.5 231.4 83.0 231.4 83.5 231.4 84.0 231.4 84.5 231.4 85.0 231.4 85.5 231.4 86.0 231.4 86.5 231.4 87.0 231.4 87.5 231.4 88.0 231.4 88.5 231.4 89.0 231.4 89.5 231.4 90.0 231.4 90.5 231.4 91.0 231.4 91.5 231.4 92.0 231.4 92.5 231.4 93.0 231.4 93.5 231.4 94.0 231.4 94.5 231.4 95.0 231.4 95.5 231.4 96.0 231.4 96.5 231.4 97.0 231.4 97.5 231.4 98.0 231.4 98.5 231.4 99.0 231.4 99.5 231.4 100.0 231.4 100.5 231.4 101.0 231.4 101.5 231.4 102.0 231.4 102.5 231.4 103.0 231.4 103.5 231.4 104.0 231.4 104.5 231.4 105.0 231.4 105.5 231.4 106.0 231.4 106.5 231.4 107.0 231.4 107.5 231.4 108.0 231.4 108.5 231.4 109.0 231.4 109.5 231.4 110.0 231.4 110.5 231.4 111.0 231.4 111.5 231.4 112.0 231.4 112.5 231.4 113.0 231.4 113.5 231.4 114.0 231.4 114.5 231.4 115.0 231.4 115.5 231.4 116.0 231.4 116.5 231.4 117.0 231.4 117.5 231.4 118.0 231.4 118.5 231.4 119.0 231.4 119.5 231.4 120.0 231.4 120.5 231.4 121.0 231.4 121.5 231.4 122.0 231.4 122.5 231.4 123.0 231.4 123.5 231.4 124.0 231.4 124.5 231.4 125.0 231.4 125.5 231.4 126.0 231.4 126.5 231.4 127.0 231.4 127.5 231.4 128.0 231.4 128.5 231.4 129.0 231.4 129.5 231.4 130.0 231.4 130.5 231.4 131.0 231.4 131.5 231.4 132.0 231.4 132.5 231.4 133.0 231.4 133.5 231.4 134.0 231.4 134.5 231.4 135.0 231.4 135.5 231.4 136.0 231.4 136.5 231.4 137.0 231.4 137.5 231.4 138.0 231.4 138.5 231.4 139.0 231.4 139.5 231.4 140.0 231.4 140.5 231.4 141.0 231.4 141.5 231.4 142.0 231.4 142.5 231.4 143.0 231.4 143.5 231.4 144.0 231.4 144.5 231.4 145.0 231.4 145.5 231.4 146.0 231.4 146.5 231.4 147.0 231.4 147.5 231.4 148.0 231.4 148.5 231.4 149.0 231.4 149.5 231.4 150.0 231.4 150.5 231.4 151.0 231.4 151.5 231.4 152.0 231.4 152.5 231.4 153.0 231.4 153.5 231.4 154.0 231.4 154.5 231.4 155.0 231.4 155.5 231.4 156.0 231.4 156.5 231.4 157.0 231.4 157.5 231.4 158.0 231.4 158.5 231.4 159.0 231.4 159.5 231.4 160.0 231.4 160.5 231.4 161.0 231.4 161.5 231.4 162.0 231.4 162.5 231.4 163.0 231.4 163.5 231.4 164.0 231.4 164.5 231.4 165.0 231.4 165.5 231.4 166.0 231.4 166.5 231.4 167.0 231.4 167.5 231.4 168.0 231.4 168.5 231.4 169.0 231.4 169.5 231.4 170.0 231.4 170.5 231.4 171.0 231.4 171.5 231.4 172.0 231.4 172.5 231.4 173.0 231.4 173.5 231.4 174.0 231.4 174.5 231.4 175.0 231.4 175.5 231.4 176.0 231.4 176.5 231.4 177.0 231.4 177.5 231.4 178.0 231.4 178.5 231.4 179.0 231.4 179.5 231.4 180.0 231.4 180.5 231.4 181.0 231.4 181.5 231.4 182.0 231.4 182.5 231.4 183.0 231.4 183.5 231.4 184.0 231.4 184.5 231.4 185.0 231.4 185.5 231.4 186.0 231.4 186.5 231.4 187.0 231.4 187.5 231.4 188.0 231.4 188.5 231.4 189.0 231.4 189.5 231.4 190.0 231.4 190.5 231.4 191.0 231.4 191.5 231.4 192.0 231.4 192.5 231.4 193.0 231.4 193.5 231.4 194.0 231.4 194.5 231.4 195.0 231.4 195.5 231.4 196.0 231.4 196.5 231.4 197.0 231.4 197.5 231.4 198.0 231.4 198.5 231.4 199.0 231.4 199.5 231.4 200.0 231.4 200.5 231.4 201.0 231.4 201.5 231.4 202.0 231.4 202.5 231.4 203.0 231.4 203.5 231.4 204.0 231.4 204.5 231.4 205.0 231.4 205.5 231.4 206.0 231.4 206.5 231.4 207.0 231.4 207.5 231.4 208.0 231.3 208.5 231.2 209.0 231.1 209.5 231.0 210.0 230.9 210.5 230.8 211.0 230.8 211.5 230.7 212.0 230.6 212.5 230.4 213.0 230.3 213.5 230.2 214.0 230.1 214.5 230.0 215.0 229.9 215.5 229.8 216.0 229.7 216.5 229.6 217.0 229.4 217.5 229.3 218.0 229.2 218.5 229.1 219.0 228.9 219.5 228.8 220.0 228.7 220.5 228.5 221.0 228.4 221.5 228.3 222.0 228.1 222.5 228.0 223.0 227.9 223.5 227.7 224.0 227.6 224.5 227.4 225.0 227.3 225.5 227.1 226.0 227.0 226.5 226.8 227.0 226.6 227.5 226.5 228.0 226.3 228.5 226.2 229.0 226.0 229.5 225.8 230.0 225.7 230.5 225.5 231.0 225.3 231.5 225.1 232.0 225.0 232.5 224.8 233.0 224.6 233.5 224.4 234.0 224.2 234.5 224.0 235.0 223.9 235.5 223.7 236.0 223.5 236.5 223.3 237.0 223.1 237.5 222.9 238.0 222.7 238.5 222.5 239.0 222.3 239.5 222.1 240.0 221.9 240.5 221.7 241.0 221.5 241.5 221.3 242.0 221.1 242.5 220.9 243.0 220.7 243.5 220.5 244.0 220.3 244.5 220.1 245.0 219.8 245.5 219.6 246.0 219.4 246.5 219.2 247.0 219.0 247.5 218.8 248.0 218.6 248.5 218.4 249.0 218.1 249.5 217.9 250.0 217.7 250.5 217.5 251.0 217.3 251.5 217.1 252.0 216.8 252.5 216.6 253.0 216.4 253.5 216.2 254.0 216.0 254.5 215.8 255.0 215.5 255.5 215.3 256.0 215.1 256.5 214.9 257.0 214.7 257.5 214.5 258.0 214.3 258.5 214.1 259.0 213.8 259.5 213.6 260.0 213.4 260.5 213.2 261.0 213.0 261.5 212.8 262.0 212.6 262.5 212.4 263.0 212.2 263.5 212.0 264.0 211.8 264.5 211.6 265.0 211.4 265.5 211.2 266.0 211.1 266.5 210.9 267.0 210.7 267.5 210.5 268.0 210.3 268.5 210.2 269.0 210.0 269.5 209.8 270.0 209.6 270.5 209.5 271.0 209.3 271.5 209.1 272.0 209.0 272.5 208.8 273.0 208.7 273.5 208.5 274.0 208.4 274.5 208.2 275.0 208.1 275.5 208.0 276.0 207.8 276.5 207.7 277.0 207.6 277.5 207.5 278.0 207.3 278.5 207.2 279.0 207.1 279.5 207.0 280.0 206.9 280.5 206.8 281.0 206.7 281.5 206.6 282.0 206.5 282.5 206.4 283.0 206.3 283.5 206.3 284.0 206.2 284.5 206.1 285.0 206.1 285.5 206.0 286.0 205.9 286.5 205.9 287.0 205.8 287.5 205.8 288.0 205.8 288.5 205.7 289.0 205.7 289.5 205.7 290.0 205.6 290.5 205.6 291.0 205.6 291.5 205.6 292.0 205.6 292.5 205.6 293.0 205.6 293.5 205.6 294.0 205.6 294.5 205.6 295.0 205.7 295.5 205.7 296.0 205.7 296.5 205.8 297.0 205.8 297.5 205.8 298.0 205.9 298.5 205.9 299.0 206.0 299.5 206.0 300.0 206.1 300.5 206.2 301.0 206.2 301.5 206.3 302.0 206.4 302.5 206.5 303.0 206.6 303.5 206.7 304.0 206.8 304.5 206.9 305.0 207.0 305.5 207.1 306.0 207.2 306.5 207.3 307.0 207.4 307.5 207.5 308.0 207.7 308.5 207.8 309.0 207.9 309.5 208.1 310.0 208.2 310.5 208.3 311.0 208.5 311.5 208.6 312.0 208.8 312.5 208.9 313.0 209.1 313.5 209.3 314.0 209.4 314.5 209.6 315.0 209.8 315.5 209.9 316.0 210.1 316.5 210.3 317.0 210.5 317.5 210.6 318.0 210.8 318.5 211.0 319.0 211.2 319.5 211.4 320.0 211.6 320.5 211.8 321.0 212.0 321.5 212.2 322.0 212.4 322.5 212.6 323.0 212.8 323.5 213.0 324.0 213.2 324.5 213.4 325.0 213.6 325.5 213.8 326.0 214.0 326.5 214.2 327.0 214.4 327.5 214.6 328.0 214.8 328.5 215.1 329.0 215.3 329.5 215.5 330.0 215.7 330.5 215.9 331.0 216.1 331.5 216.3 332.0 216.6 332.5 216.8 333.0 217.0 333.5 217.2 334.0 217.4 334.5 217.6 335.0 217.9 335.5 218.1 336.0 218.3 336.5 218.5 337.0 218.7 337.5 218.9 338.0 219.1 338.5 219.4 339.0 219.6 339.5 219.8 340.0 220.0 340.5 220.2 341.0 220.4 341.5 220.6 342.0 220.8 342.5 221.0 343.0 221.2 343.5 221.4 344.0 221.7 344.5 221.9 345.0 222.1 345.5 222.3 346.0 222.5 346.5 222.7 347.0 222.8 347.5 223.0 348.0 223.2 348.5 223.4 349.0 223.6 349.5 223.8 350.0 224.0 350.5 224.2 351.0 224.4 351.5 224.5 352.0 224.7 352.5 224.9 353.0 225.1 353.5 225.3 354.0 225.4 354.5 225.6 355.0 225.8 355.5 225.9 356.0 226.1 356.5 226.3 357.0 226.4 357.5 226.6 358.0 226.8 358.5 226.9 359.0 227.1 359.5 227.2 360.0 227.4 360.5 227.5 361.0 227.7 361.5 227.8 362.0 228.0 362.5 228.1 363.0 228.2 363.5 228.4 364.0 228.5 364.5 228.6 365.0 228.8 365.5 228.9 366.0 229.0 366.5 229.2 367.0 229.3 367.5 229.4 368.0 229.5 368.5 229.6 369.0 229.8 369.5 229.9 370.0 230.0 370.5 230.1 371.0 230.2 371.5 230.3 372.0 230.4 372.5 230.5 373.0 230.6 373.5 230.7 374.0 230.8 374.5 230.9 375.0 231.0 375.5 231.1 376.0 231.2 376.5 231.3 377.0 231.4 377.5 231.4 378.0 231.4 378.5 231.4 379.0 231.4 379.5 231.4 380.0 231.4 380.5 231.4 381.0 231.4 381.5 231.4 382.0 231.4 382.5 231.4 383.0 231.4 383.5 231.4 384.0 231.4 384.5 231.4 385.0 231.4 385.5 231.4 386.0 231.4 386.5 231.4 387.0 231.4 387.5 231.4 388.0 231.4 388.5 231.4 389.0 231.4 389.5 231.4 390.0 231.4 390.5 231.4 391.0 231.4 391.5 231.4 392.0 231.4 392.5 231.4 393.0 231.4 393.5 231.4 394.0 231.4 394.5 231.4 395.0 231.4 395.5 231.4 396.0 231.4 396.5 231.4 397.0 231.4 397.5 231.4 398.0 231.4 398.5 231.4 399.0 231.4 399.5 231.4 400.0 231.4 400.5 231.4 401.0 231.4 401.5 231.4 402.0 231.4 402.5 231.4 403.0 231.4 403.5 231.4 404.0 231.4 404.5 231.4 405.0 231.4 405.5 231.4 406.0 231.4 406.5 231.4 407.0 231.4 407.5 231.4 408.0 231.4 408.5 231.4 409.0 231.4 409.5 231.4 410.0 231.4 410.5 231.4 411.0 231.4 411.5 231.4 412.0 231.4 412.5 231.4 413.0 231.4 413.5 231.4 414.0 231.4 414.5 231.4 415.0 231.4 415.5 231.4 416.0 231.4 416.5 231.4 417.0 231.4 417.5 231.4 418.0 231.4 418.5 231.4 419.0 231.4 419.5 231.5 420.0 231.5 420.5 231.5 421.0 231.5 421.5 231.5 422.0 231.5 422.5 231.5 423.0 231.5 423.5 231.5 424.0 231.5 424.5 231.5 425.0 231.5 425.5 231.5 426.0 231.5 426.5 231.5 427.0 231.5 427.5 231.5 428.0 231.5 428.5 231.5 429.0 231.5 429.5 231.5 430.0 231.5 430.5 231.5 431.0 231.5 431.5 231.5 432.0 231.5 432.5 231.5 433.0 231.6 433.5 231.6 434.0 231.6 434.5 231.6 435.0 231.6 435.5 231.7 436.0 231.7 436.5 231.7 437.0 231.7 437.5 231.8 438.0 231.8 438.5 231.8 439.0 231.9 439.5 231.9 440.0 231.9 440.5 232.0 441.0 232.0 441.5 232.1 442.0 232.1 442.5 232.2 443.0 232.2 443.5 232.3 444.0 232.3 444.5 232.4 445.0 232.4 445.5 232.5 446.0 232.5 446.5 232.6 447.0 232.6 447.5 232.7 448.0 232.8 448.5 232.8 449.0 232.9 449.5 233.0 450.0 233.1 450.5 233.2 451.0 233.4 451.5 233.6 452.0 233.7 452.5 233.9 453.0 234.1 453.5 234.4 454.0 234.6 454.5 234.8 455.0 235.1 455.5 235.3 456.0 235.6 456.5 235.9 457.0 236.2 457.5 236.4 458.0 236.7 458.5 237.0 459.0 237.3 459.5 237.5 460.0 237.8 460.5 238.1 461.0 238.4 461.5 238.6 462.0 238.9 462.5 239.1 463.0 239.4 463.5 239.6 464.0 239.8 464.5 240.0 465.0 240.2 465.5 240.4 466.0 240.5 466.5 240.7 467.0 240.8 467.5 241.0 468.0 241.1 468.5 241.3 469.0 241.4 469.5 241.5 470.0 241.7 470.5 241.8 471.0 241.9 471.5 242.1 472.0 242.2 472.5 242.3 473.0 242.3 473.5 242.4 474.0 242.5 474.5 242.5 475.0 242.5 475.5 242.5 476.0 242.4 476.5 242.3 477.0 242.2 477.5 242.1 478.0 241.9 478.5 241.7 479.0 241.5 479.5 241.2 480.0 241.0 480.5 240.7 481.0 240.4 481.5 240.1 482.0 239.7 482.5 239.4 483.0 239.0 483.5 238.7 484.0 238.2 484.5 237.7 485.0 237.0 485.5 236.3 486.0 235.4 486.5 234.6 487.0 233.7 487.5 232.7 488.0 231.7 488.5 230.7 489.0 229.6 489.5 228.6 490.0 227.6 490.5 226.6 491.0 225.6 491.5 224.7 492.0 223.8 492.5 223.0 493.0 222.2 493.5 221.4 494.0 220.6 494.5 219.8 495.0 219.0 495.5 218.2 496.0 217.5 496.5 216.7 497.0 215.9 497.5 215.2 498.0 214.4 498.5 213.6 499.0 212.9 499.5 212.1 500.0 211.3 500.5 210.6 501.0 209.8 501.5 209.0 502.0 208.2 502.5 207.4 503.0 206.6 503.5 205.8 504.0 205.0 504.5 204.2 505.0 203.4 505.5 202.5 506.0 201.7 506.5 200.8 507.0 200.0 507.5 199.1 508.0 198.3 508.5 197.4 509.0 196.6 509.5 195.7 510.0 194.8 510.5 194.0 511.0 193.1 511.5 192.2 512.0 191.4 512.5 190.5 513.0 189.6 513.5 188.7 514.0 187.7 514.5 186.8 515.0 185.8 515.5 184.9 516.0 183.9 516.5 182.9 517.0 182.0 517.5 181.1 518.0 180.2 518.5 179.4 519.0 178.6 519.5 177.9 520.0 177.2 520.5 176.6 521.0 175.9 521.5 175.3 522.0 174.7 522.5 174.1 523.0 173.5 523.5 173.0 524.0 172.6 524.5 172.2 525.0 172.0 525.5 171.9 526.0 171.8 526.5 171.7 527.0 171.6 527.5 171.6 528.0 171.6 528.5 171.7 529.0 171.8 529.5 172.0 530.0 172.2 530.5 172.5 531.0 172.8 531.5 173.1 532.0 173.4 532.5 173.7 533.0 174.1 533.5 174.5 534.0 174.8 534.5 175.3 535.0 175.9 535.5 176.7 536.0 177.4 536.5 178.3 537.0 179.3 537.5 180.2 538.0 181.3 538.5 182.3 539.0 183.3 539.5 184.4 540.0 185.4 540.5 186.4 541.0 187.3 541.5 188.2 542.0 189.1 542.5 190.0 543.0 190.9 543.5 191.8 544.0 192.7 544.5 193.6 545.0 194.5 545.5 195.4 546.0 196.3 546.5 197.2 547.0 198.1 547.5 199.1 548.0 200.0 548.5 201.0 549.0 201.9 549.5 202.9 550.0 203.9 550.5 204.9 551.0 206.0 551.5 207.0 552.0 208.1 552.5 209.1 553.0 210.2 553.5 211.3 554.0 212.4 554.5 213.5 555.0 214.7 555.5 215.8 556.0 217.0 556.5 218.2 557.0 219.5 557.5 220.7 558.0 222.0 558.5 223.4 559.0 224.8 559.5 226.2 560.0 227.7 560.5 229.2 561.0 230.8 561.5 232.3 562.0 233.9 562.5 235.5 563.0 237.1 563.5 238.7 564.0 240.2 564.5 241.8 565.0 243.3 565.5 244.9 566.0 246.6 566.5 248.3 567.0 250.0 567.5 251.8 568.0 253.5 568.5 255.1 569.0 256.6 569.5 257.9 570.0 259.1 570.5 260.0 571.0 260.9 571.5 261.7 572.0 262.5 572.5 263.2 573.0 264.0 573.5 264.7 574.0 265.5 574.5 266.1 575.0 266.8 575.5 267.4 576.0 268.0 576.5 268.5 577.0 268.9 577.5 269.4 578.0 269.7 578.5 270.0 579.0 270.3 579.5 270.5 580.0 270.6 580.5 270.6 581.0 270.6 581.5 270.5 582.0 270.3 582.5 270.1 583.0 269.9 583.5 269.6 584.0 269.3 584.5 269.0 585.0 268.6 585.5 268.2 586.0 267.8 586.5 267.4 587.0 266.9 587.5 266.5 588.0 266.0 588.5 265.6 589.0 265.1 589.5 264.7 590.0 264.2 590.5 263.8 591.0 263.4 591.5 263.0 592.0 262.6 592.5 262.2 593.0 261.8 593.5 261.3 594.0 260.9 594.5 260.4 595.0 260.0 595.5 259.5 596.0 259.1 596.5 258.6 597.0 258.1 597.5 257.6 598.0 257.2 598.5 256.7 599.0 256.2 599.5 255.7 600.0 255.3 600.5 254.8 601.0 254.3 601.5 253.8 602.0 253.3 602.5 252.8 603.0 252.3 603.5 251.8 604.0 251.3 604.5 250.8 605.0 250.3 605.5 249.8 606.0 249.3 606.5 248.8 607.0 248.3 607.5 247.8 608.0 247.4 608.5 246.9 609.0 246.5 609.5 246.0 610.0 245.6 610.5 245.2 611.0 244.8 611.5 244.4 612.0 244.0 612.5 243.6 613.0 243.2 613.5 242.8 614.0 242.4 614.5 242.0 615.0 241.7 615.5 241.3 616.0 240.9 616.5 240.6 617.0 240.2 617.5 239.9 618.0 239.5 618.5 239.2 619.0 238.8 619.5 238.5 620.0 238.1 620.5 237.8 621.0 237.4 621.5 237.0 622.0 236.6 622.5 236.2 623.0 235.8 623.5 235.4 624.0 235.1 624.5 234.7 625.0 234.3 625.5 234.0 626.0 233.7 626.5 233.4 627.0 233.2 627.5 233.0 628.0 232.9 628.5 232.8 629.0 232.7 629.5 232.6 630.0 232.6 630.5 232.5 631.0 232.4 631.5 232.3 632.0 232.3 632.5 232.2 633.0 232.2 633.5 232.1 634.0 232.1 634.5 232.0 635.0 231.9 635.5 231.9 636.0 231.9 636.5 231.8 637.0 231.8 637.5 231.7 638.0 231.7 638.5 231.7 639.0 231.6 639.5 231.6 640.0 231.6 640.5 231.5 641.0 231.5 641.5 231.5 642.0 231.5 642.5 231.5 643.0 231.4 643.5 231.4 644.0 231.4 644.5 231.4 645.0 231.4 645.5 231.4 646.0 231.4 646.5 231.4 647.0 231.4 647.5 231.4 648.0 231.4 648.5 231.4 649.0 231.4 649.5 231.4 650.0 231.4 650.5 231.4 651.0 231.4 651.5 231.4 652.0 231.4 652.5 231.4 653.0 231.4 653.5 231.4 654.0 231.4 654.5 231.4 655.0 231.4 655.5 231.4 656.0 231.4 656.5 231.4 657.0 231.4 657.5 231.4 658.0 231.4 658.5 231.4 659.0 231.4 659.5 231.4 660.0 231.4 660.5 231.4 661.0 231.4 661.5 231.4 662.0 231.4 662.5 231.4 663.0 231.4 663.5 231.4 664.0 231.4 664.5 231.4 665.0 231.4 665.5 231.4 666.0 231.4 666.5 231.4 667.0 231.4 667.5 231.4 668.0 231.4 668.5 231.4 669.0 231.4 669.5 231.4 670.0 231.4 670.5 231.4 671.0 231.4 671.5 231.4 672.0 231.4 672.5 231.4 673.0 231.4 673.5 231.4 674.0 231.4 674.5 231.4 675.0 231.4 675.5 231.4 676.0 231.4 676.5 231.4 677.0 231.4 677.5 231.4 678.0 231.4 678.5 231.4 679.0 231.4 679.5 231.4 680.0 231.4 680.5 231.4 681.0 231.4 681.5 231.4 682.0 231.4 682.5 231.4 683.0 231.4 683.5 231.4 684.0 231.4 684.5 231.4 685.0 231.4 685.5 231.4 686.0 231.4 686.5 231.4 687.0 231.4 687.5 231.4 688.0 231.4 688.5 231.4 689.0 231.4 689.5 231.4 690.0 231.4 690.5 231.4 691.0 231.4 691.5 231.4 692.0 231.4 692.5 231.4 693.0 231.4 693.5 231.4 694.0 231.4 694.5 231.4 695.0 231.4 695.5 231.4 696.0 231.4 696.5 231.4 697.0 231.4 697.5 231.4 698.0 231.4 698.5 231.4 699.0 231.4 699.5 231.4 700.0 231.4 700.5 231.4 701.0 231.4 701.5 231.4 702.0 231.4 702.5 231.4 703.0 231.4 703.5 231.4 704.0 231.4 704.5 231.4 705.0 231.4 705.5 231.4 706.0 231.4 706.5 231.4 707.0 231.4 707.5 231.4 708.0 231.4 708.5 231.4 709.0 231.4 709.5 231.4 710.0 231.4 710.5 231.4 711.0 231.4 711.5 231.4 712.0 231.4 712.5 231.4 713.0 231.4 713.5 231.4 714.0 231.4 714.5 231.4 715.0 231.4 715.5 231.4 716.0 231.4 716.5 231.4 717.0 231.4 717.5 231.4 718.0 231.4 718.5 231.4 719.0 231.4 719.5 231.4 720.0 231.4 720.5 231.4 721.0 231.4 721.5 231.4 722.0 231.4 722.5 231.4 723.0 231.4 723.5 231.4 724.0 231.4 724.5 231.4 725.0 231.4 725.5 231.4 726.0 231.4 726.5 231.4 727.0 231.4 727.5 231.4 728.0 231.4 728.5 231.4 729.0 231.4 729.5 231.4 730.0 231.4 730.5 231.4 731.0 231.4 731.5 231.4 732.0 231.4 732.5 231.4 733.0 231.4 733.5 231.4 734.0 231.4 734.5 231.4 735.0 231.4 735.5 231.4 736.0 231.4 736.5 231.4 737.0 231.4 737.5 231.4 738.0 231.4 738.5 231.4 739.0 231.4 739.5 231.4 740.0 231.4 740.5 231.4 741.0 231.4 741.5 231.4 742.0 231.4 742.5 231.4 743.0 231.4 743.5 231.4 744.0 231.4 744.5 231.4 745.0 231.4 745.5 231.4 746.0 231.4 746.5 231.4 747.0 231.4 747.5 231.4 748.0 231.4 748.5 231.4 749.0 231.4 749.5 231.4 750.0 231.4 750.5 231.4 751.0 231.4 751.5 231.4 752.0 231.4 752.5 231.4 753.0 231.4 753.5 231.4 754.0 231.4 754.5 231.4 755.0 231.4 755.5 231.4 756.0 231.4 756.5 231.4 757.0 231.4 757.5 231.4 758.0 231.4 758.5 231.4 759.0 231.4 759.5 231.4 760.0 231.4 760.5 231.4 761.0 231.4 761.5 231.4 762.0 231.4 762.5 231.4 763.0 231.4 763.5 231.4 764.0 231.4 764.5 231.4 765.0 231.4 765.5 231.4 766.0 231.4 766.5 231.4 767.0 231.4 767.5 231.4 768.0 231.4 768.5 231.4 769.0 231.3 769.5 231.3 770.0 231.3 770.5 231.3 771.0 231.2 771.5 231.2 772.0 231.2 772.5 231.1 773.0 231.1 773.5 231.0 774.0 231.0 774.5 231.0 775.0 230.9 775.5 230.9 776.0 230.9 776.5 230.8 777.0 230.8 777.5 230.7 778.0 230.7 778.5 230.6 779.0 230.6 779.5 230.6 780.0 230.5 780.5 230.5 781.0 230.4 781.5 230.4 782.0 230.3 782.5 230.3 783.0 230.2 783.5 230.2 784.0 230.1 784.5 230.1 785.0 230.0 785.5 230.0 786.0 229.9 786.5 229.8 787.0 229.8 787.5 229.7 788.0 229.7 788.5 229.6 789.0 229.5 789.5 229.5 790.0 229.4 790.5 229.4 791.0 229.3 791.5 229.2 792.0 229.2 792.5 229.1 793.0 229.0 793.5 228.9 794.0 228.9 794.5 228.8 795.0 228.7 795.5 228.7 796.0 228.6 796.5 228.5 797.0 228.4 797.5 228.4 798.0 228.3 798.5 228.2 799.0 228.1 799.5 228.0 800.0 228.0 800.5 227.9 801.0 227.8 801.5 227.7 802.0 227.6 802.5 227.5 803.0 227.5 803.5 227.4 804.0 227.3 804.5 227.2 805.0 227.1 805.5 227.0 806.0 226.9 806.5 226.8 807.0 226.7 807.5 226.7 808.0 226.6 808.5 226.5 809.0 226.4 809.5 226.3 810.0 226.2 810.5 226.1 811.0 226.0 811.5 225.9 812.0 225.8 812.5 225.7 813.0 225.6 813.5 225.5 814.0 225.4 814.5 225.3 815.0 225.2 815.5 225.1 816.0 225.0 816.5 224.9 817.0 224.8 817.5 224.7 818.0 224.6 818.5 224.5 819.0 224.4 819.5 224.3 820.0 224.2 820.5 224.1 821.0 224.0 821.5 223.9 822.0 223.8 822.5 223.6 823.0 223.5 823.5 223.4 824.0 223.3 824.5 223.2 825.0 223.1 825.5 223.0 826.0 222.9 826.5 222.8 827.0 222.7 827.5 222.6 828.0 222.5 828.5 222.4 829.0 222.3 829.5 222.2 830.0 222.1 830.5 222.0 831.0 221.9 831.5 221.8 832.0 221.7 832.5 221.6 833.0 221.5 833.5 221.4 834.0 221.3 834.5 221.2 835.0 221.1 835.5 221.0 836.0 220.9 836.5 220.8 837.0 220.8 837.5 220.7 838.0 220.6 838.5 220.5 839.0 220.4 839.5 220.3 840.0 220.2 840.5 220.1 841.0 220.1 841.5 220.0 842.0 219.9 842.5 219.8 843.0 219.7 843.5 219.7 844.0 219.6 844.5 219.5 845.0 219.4 845.5 219.4 846.0 219.3 846.5 219.2 847.0 219.2 847.5 219.1 848.0 219.0 848.5 219.0 849.0 218.9 849.5 218.8 850.0 218.8 850.5 218.7 851.0 218.7 851.5 218.6 852.0 218.6 852.5 218.5 853.0 218.5 853.5 218.4 854.0 218.4 854.5 218.3 855.0 218.3 855.5 218.3 856.0 218.2 856.5 218.2 857.0 218.2 857.5 218.1 858.0 218.1 858.5 218.1 859.0 218.0 859.5 218.0 860.0 218.0 860.5 218.0 861.0 218.0 861.5 217.9 862.0 217.9 862.5 217.9 863.0 217.9 863.5 217.9 864.0 217.9 864.5 217.9 865.0 217.9 865.5 217.9 866.0 217.9 866.5 217.9 867.0 217.9 867.5 217.9 868.0 217.9 868.5 217.9 869.0 218.0 869.5 218.0 870.0 218.0 870.5 218.0 871.0 218.0 871.5 218.1 872.0 218.1 872.5 218.1 873.0 218.2 873.5 218.2 874.0 218.2 874.5 218.3 875.0 218.3 875.5 218.3 876.0 218.4 876.5 218.4 877.0 218.5 877.5 218.5 878.0 218.6 878.5 218.6 879.0 218.7 879.5 218.7 880.0 218.8 880.5 218.8 881.0 218.9 881.5 219.0 882.0 219.0 882.5 219.1 883.0 219.2 883.5 219.2 884.0 219.3 884.5 219.4 885.0 219.4 885.5 219.5 886.0 219.6 886.5 219.7 887.0 219.7 887.5 219.8 888.0 219.9 888.5 220.0 889.0 220.1 889.5 220.1 890.0 220.2 890.5 220.3 891.0 220.4 891.5 220.5 892.0 220.6 892.5 220.7 893.0 220.8 893.5 220.8 894.0 220.9 894.5 221.0 895.0 221.1 895.5 221.2 896.0 221.3 896.5 221.4 897.0 221.5 897.5 221.6 898.0 221.7 898.5 221.8 899.0 221.9 899.5 222.0 900.0 222.1 900.5 222.2 901.0 222.3 901.5 222.4 902.0 222.5 902.5 222.6 903.0 222.7 903.5 222.8 904.0 222.9 904.5 223.0 905.0 223.1 905.5 223.2 906.0 223.3 906.5 223.4 907.0 223.5 907.5 223.7 908.0 223.8 908.5 223.9 909.0 224.0 909.5 224.1 910.0 224.2 910.5 224.3 911.0 224.4 911.5 224.5 912.0 224.6 912.5 224.7 913.0 224.8 913.5 224.9 914.0 225.0 914.5 225.1 915.0 225.2 915.5 225.3 916.0 225.4 916.5 225.5 917.0 225.6 917.5 225.7 918.0 225.8 918.5 225.9 919.0 226.0 919.5 226.1 920.0 226.2 920.5 226.3 921.0 226.4 921.5 226.5 922.0 226.6 922.5 226.7 923.0 226.7 923.5 226.8 924.0 226.9 924.5 227.0 925.0 227.1 925.5 227.2 926.0 227.3 926.5 227.4 927.0 227.5 927.5 227.5 928.0 227.6 928.5 227.7 929.0 227.8 929.5 227.9 930.0 228.0 930.5 228.0 931.0 228.1 931.5 228.2 932.0 228.3 932.5 228.4 933.0 228.4 933.5 228.5 934.0 228.6 934.5 228.7 935.0 228.7 935.5 228.8 936.0 228.9 936.5 228.9 937.0 229.0 937.5 229.1 938.0 229.2 938.5 229.2 939.0 229.3 939.5 229.4 940.0 229.4 940.5 229.5 941.0 229.5 941.5 229.6 942.0 229.7 942.5 229.7 943.0 229.8 943.5 229.8 944.0 229.9 944.5 230.0 945.0 230.0 945.5 230.1 946.0 230.1 946.5 230.2 947.0 230.2 947.5 230.3 948.0 230.3 948.5 230.4 949.0 230.4 949.5 230.5 950.0 230.5 950.5 230.6 951.0 230.6 951.5 230.6 952.0 230.7 952.5 230.7 953.0 230.8 953.5 230.8 954.0 230.9 954.5 230.9 955.0 230.9 955.5 231.0 956.0 231.0 956.5 231.0 957.0 231.1 957.5 231.1 958.0 231.2 958.5 231.2 959.0 231.2 959.5 231.3 960.0 231.3 960.5 231.3 961.0 231.3 961.5 231.4 962.0 231.4 962.5 231.4 963.0 231.4 963.5 231.4 964.0 231.4 964.5 231.4 965.0 231.4 965.5 231.4 966.0 231.4 966.5 231.4 967.0 231.4 967.5 231.4 968.0 231.4 968.5 231.4 969.0 231.4 969.5 231.4 970.0 231.4 970.5 231.4 971.0 231.4 971.5 231.4 972.0 231.4 972.5 231.4 973.0 231.4 973.5 231.4 974.0 231.4 974.5 231.4 975.0 231.4 975.5 231.4 976.0 231.4 976.5 231.4 977.0 231.4 977.5 231.4 978.0 231.4 978.5 231.4 979.0 231.4 979.5 231.4 980.0 231.4 980.5 231.4 981.0 231.4 981.5 231.4 982.0 231.4 982.5 231.4 983.0 231.4 983.5 231.4 984.0 231.4 984.5 231.4 985.0 231.4 985.5 231.4 986.0 231.4 986.5 231.4 987.0 231.4 987.5 231.4 988.0 231.4 988.5 231.4 989.0 231.4 989.5 231.4 990.0 231.4 990.5 231.4 991.0 231.4 991.5 231.4 992.0 231.4 992.5 231.4 993.0 231.4 993.5 231.4 994.0 231.4 994.5 231.4 995.0 231.4 995.5 231.4 996.0 231.4 996.5 231.4 997.0 231.4 997.5 231.4 998.0 231.4 998.5 231.4 999.0 231.4 999.5 231.4 1000.0 231.4 1000.5 231.4 1001.0 231.4 1001.5 231.4 1002.0 231.4 1002.5 231.4 1003.0 231.4 1003.5 231.4 1004.0 231.4 1004.5 231.4 1005.0 231.4 1005.5 231.4 1006.0 231.4 1006.5 231.4 1007.0 231.4 1007.5 231.4 1008.0 231.4 1008.5 231.4 1009.0 231.4 1009.5 231.4 1010.0 231.4 1010.5 231.4 1011.0 231.4" fill="none" stroke="#ffc800" stroke-width="1.25" shape-rendering="crispEdges"/>
<line x1="347" y1="40" x2="347" y2="150" stroke="#ffffff" stroke-width="2" stroke-dasharray="9 6 3 6" shape-rendering="crispEdges"/>
<line x1="680" y1="40" x2="680" y2="150" stroke="#ffffff" stroke-width="2" stroke-dasharray="9 6 3 6" shape-rendering="crispEdges"/>
<path d="M512.5 150 L516 158 L509 158 Z" fill="#f5ee00"/>
<path d="M512.5 276 L516 284 L509 284 Z" fill="#f5c400"/>
<path d="M1012 65.5 L1020 61.5 L1020 69 Z" fill="#f5ee00"/>
<path d="M2 105h10v2h-9v2h-1z" fill="#f5ee00"/>
<path d="M2 231h10v2h-9v2h-1z" fill="#f5c400"/>
</svg>
<div class="t" style="left:0px;top:93.38px;font-size:9px;line-height:9px;color:#e8e000;font-weight:normal;font-style:normal;letter-spacing:0.3px;">C1</div>
<div class="t" style="left:0.5px;top:219.38px;font-size:9px;line-height:9px;color:#f0b800;font-weight:normal;font-style:normal;letter-spacing:0.3px;">F1</div>
<div class="a" style="left:0;top:0;width:1024px;height:34px;background:#141414"></div>
<div class="a" style="left:0;top:34px;width:1024px;height:1px;background:#13202e"></div>
<div class="a" style="left:58px;top:8px;width:1px;height:19px;background:#4a4a4a"></div>
<div class="a" style="left:136px;top:8px;width:1px;height:19px;background:#4a4a4a"></div>
<div class="a" style="left:230px;top:8px;width:1px;height:19px;background:#4a4a4a"></div>
<div class="a" style="left:307px;top:8px;width:1px;height:19px;background:#4a4a4a"></div>
<div class="a" style="left:386px;top:8px;width:1px;height:19px;background:#4a4a4a"></div>
<div class="a" style="left:469px;top:8px;width:1px;height:19px;background:#4a4a4a"></div>
<div class="a" style="left:555px;top:8px;width:1px;height:19px;background:#4a4a4a"></div>
<div class="a" style="left:619px;top:8px;width:1px;height:19px;background:#4a4a4a"></div>
<div class="a" style="left:703px;top:8px;width:1px;height:19px;background:#4a4a4a"></div>
<div class="a" style="left:782px;top:8px;width:1px;height:19px;background:#4a4a4a"></div>
<div class="a" style="left:863px;top:8px;width:1px;height:19px;background:#4a4a4a"></div>
<div class="t" style="left:26px;top:11.84px;font-size:12px;line-height:12px;color:#f6f6f6;font-weight:normal;font-style:normal;"><i class="w7">F</i><i class="w3">i</i><i class="w3">l</i><i class="w7">e</i></div>
<div class="t" style="left:84px;top:11.84px;font-size:12px;line-height:12px;color:#f6f6f6;font-weight:normal;font-style:normal;"><i class="w8">V</i><i class="w7">e</i><i class="w4">r</i><i class="w3">t</i><i class="w3">i</i><i class="w6">c</i><i class="w7">a</i><i class="w3">l</i></div>
<div class="t" style="left:162px;top:11.84px;font-size:12px;line-height:12px;color:#f6f6f6;font-weight:normal;font-style:normal;"><i class="w7">T</i><i class="w3">i</i><i class="w10">m</i><i class="w7">e</i><i class="w7">b</i><i class="w7">a</i><i class="w6">s</i><i class="w7">e</i></div>
<div class="t" style="left:256px;top:11.84px;font-size:12px;line-height:12px;color:#f6f6f6;font-weight:normal;font-style:normal;"><i class="w7">T</i><i class="w4">r</i><i class="w3">i</i><i class="w7">g</i><i class="w7">g</i><i class="w7">e</i><i class="w4">r</i></div>
<div class="t" style="left:333px;top:11.84px;font-size:12px;line-height:12px;color:#f6f6f6;font-weight:normal;font-style:normal;"><i class="w9">D</i><i class="w3">i</i><i class="w6">s</i><i class="w7">p</i><i class="w3">l</i><i class="w7">a</i><i class="w6">y</i></div>
<div class="t" style="left:412px;top:11.84px;font-size:12px;line-height:12px;color:#f6f6f6;font-weight:normal;font-style:normal;"><i class="w9">C</i><i class="w7">u</i><i class="w4">r</i><i class="w6">s</i><i class="w7">o</i><i class="w4">r</i><i class="w6">s</i></div>
<div class="t" style="left:495px;top:11.84px;font-size:12px;line-height:12px;color:#f6f6f6;font-weight:normal;font-style:normal;"><i class="w10">M</i><i class="w7">e</i><i class="w7">a</i><i class="w6">s</i><i class="w7">u</i><i class="w4">r</i><i class="w7">e</i></div>
<div class="t" style="left:581px;top:11.84px;font-size:12px;line-height:12px;color:#f6f6f6;font-weight:normal;font-style:normal;"><i class="w10">M</i><i class="w7">a</i><i class="w3">t</i><i class="w7">h</i></div>
<div class="t" style="left:645px;top:11.84px;font-size:12px;line-height:12px;color:#f6f6f6;font-weight:normal;font-style:normal;"><i class="w8">A</i><i class="w7">n</i><i class="w7">a</i><i class="w3">l</i><i class="w6">y</i><i class="w6">s</i><i class="w3">i</i><i class="w6">s</i></div>
<div class="t" style="left:729px;top:11.84px;font-size:12px;line-height:12px;color:#f6f6f6;font-weight:normal;font-style:normal;"><i class="w9">U</i><i class="w3">t</i><i class="w3">i</i><i class="w3">l</i><i class="w3">i</i><i class="w3">t</i><i class="w3">i</i><i class="w7">e</i><i class="w6">s</i></div>
<div class="t" style="left:808px;top:11.84px;font-size:12px;line-height:12px;color:#f6f6f6;font-weight:normal;font-style:normal;"><i class="w8">S</i><i class="w7">u</i><i class="w7">p</i><i class="w7">p</i><i class="w7">o</i><i class="w4">r</i><i class="w3">t</i></div>
<svg class="a" style="left:0;top:0" width="1024" height="34">
<path d="M8 12.2 H10 V22 H17 V12.2 H19 V22.6 Q19 23.6 18 23.6 H9 Q8 23.6 8 22.6 Z" fill="#b8b8b8"/>
<path d="M10 12 H17 L15.3 9 H11.7 Z" fill="#b8b8b8"/>
<circle cx="13.5" cy="10.3" r="0.8" fill="#141414"/>
<rect x="10.5" y="12.8" width="6" height="1.3" fill="#c4c4c4"/>
<path d="M11 15.5h5M11 17h5M11 18.5h5" stroke="#4a4a4a" stroke-width="0.8"/>
<path d="M71.6 9.8 L75.2 13.3 H73.4 V19.4 H75.2 L71.6 23 L68 19.4 H69.9 V13.3 H68 Z" fill="#f2f2f2"/>
<path d="M143 16.6 L146.6 13 V15.1 H153.4 V13 L157 16.6 L153.4 20.2 V18.1 H146.6 V20.2 Z" fill="#b4b4b4"/>
<path d="M243 10.5 v12.5 h2 v-7.5 l3.4 -1.5 l-3.4 -3.5 z" fill="#a8a8a8"/>
<rect x="315.6" y="13.4" width="11.5" height="8" rx="0.8" fill="none" stroke="#b8b8b8" stroke-width="1.4"/>
<path d="M317.5 18.9 L319 17 L320.5 17.3 L322 16.2 L323.5 16.5 L325.5 18.9 Z" fill="#bcbcbc"/>
<path d="M404.8 12.2 L402.8 19.2 L401.2 17.6 L397.8 21 L395.8 19 L399.2 15.6 L397.8 14.2 Z" fill="#b8b8b8"/>
<rect x="479.5" y="10.5" width="8" height="12" rx="1.2" fill="none" stroke="#a0a0a0" stroke-width="1.1"/>
<path d="M480.5 13h2.5M480.5 14.5h2.5M480.5 18h2.5M480.5 19.5h2.5" stroke="#6a6430" stroke-width="0.9"/>
<path d="M481 16.5h4" stroke="#e0e0e0" stroke-width="1"/>
<rect x="563.3" y="11.9" width="10.8" height="10.8" rx="1" fill="#b8b8b8"/>
<rect x="565.3" y="13.3" width="7.4" height="2.5" fill="#141414"/>
<path d="M565.3 16.9h1.8v1.3h-1.8zM568.3 16.9h1.8v1.3h-1.8zM571.3 16.9h1.8v1.3h-1.8zM565.3 18.8h1.8v1.3h-1.8zM568.3 18.8h1.8v1.3h-1.8zM571.3 18.8h1.8v1.3h-1.8zM565.3 20.6h1.8v1.2h-1.8zM568.3 20.6h1.8v1.2h-1.8zM571.3 20.6h1.8v1.2h-1.8z" fill="#141414"/>
<path d="M626.6 12 V22.6 H639" fill="none" stroke="#b0b0b0" stroke-width="1.3"/>
<path d="M628.3 18.8 L631.8 16.2 L634.6 18.3 L638 14.8" fill="none" stroke="#b8b8b8" stroke-width="1.3"/>
<path d="M635.6 13.2 H639.2 V16.8 Z" fill="#b8b8b8"/>
<path d="M714.5 15 L721.5 22" stroke="#b8b8b8" stroke-width="3"/>
<path d="M711.2 14 A3.2 3.2 0 1 0 716 11.2 L714.2 13.2 L712.8 12.6 Z" fill="#b8b8b8"/>
<circle cx="720.8" cy="21.2" r="0.8" fill="#141414"/>
<path d="M719.6 15 L723 11.6" stroke="#b8b8b8" stroke-width="3.2" stroke-linecap="round"/>
<path d="M711.5 22.5 L715.8 18.2" stroke="#b8b8b8" stroke-width="2.4"/>
<circle cx="796" cy="16.9" r="6.2" fill="#b8b8b8"/>
<rect x="795" y="16.6" width="2.1" height="4.2" fill="#111"/>
<rect x="795" y="13.9" width="2.1" height="1.5" fill="#111"/>
</svg>
<div class="a" style="left:4px;top:288px;width:97px;height:80px;background:#444"></div>
<div class="a" style="left:4px;top:288px;width:97px;height:16px;background:#f3ee00"></div>
<div class="a" style="left:64px;top:289px;width:34px;height:14px;background:#000;border-radius:3px"></div>
<div class="t" style="left:8px;top:289.84px;font-size:12px;line-height:12px;color:#000;font-weight:normal;font-style:normal;"><i class="w9">C</i><i class="w7">1</i></div>
<div class="t" style="left:67px;top:291.04px;font-size:10px;line-height:10px;color:#e8e000;font-weight:normal;font-style:normal;"><i class="w7">D</i><i class="w7">C</i><i class="w6">1</i><i class="w8">M</i></div>
<div class="t" style="right:925px;top:306.84px;font-size:12px;line-height:12px;color:#f0f0f0;font-weight:normal;font-style:normal;"><i class="w7">4</i><i class="w7">1</i><i class="w7">0</i><i class="w3">&nbsp;</i><i class="w10">m</i><i class="w8">V</i><i class="w3">/</i><i class="w7">d</i><i class="w3">i</i><i class="w6">v</i></div>
<div class="t" style="right:925px;top:321.84px;font-size:12px;line-height:12px;color:#f0f0f0;font-weight:normal;font-style:normal;"><i class="w4">-</i><i class="w7">3</i><i class="w7">3</i><i class="w7">5</i><i class="w3">&nbsp;</i><i class="w10">m</i><i class="w8">V</i><i class="w3">&nbsp;</i><i class="w7">o</i><i class="w3">f</i><i class="w6">s</i><i class="w3">t</i></div>
<div class="a" style="left:103px;top:287px;width:99px;height:82px;background:#1f3d5e;border:2px solid #1a8cfa"></div>
<div class="a" style="left:105px;top:289px;width:95px;height:15px;background:#f5c400"></div>
<div class="t" style="left:107px;top:289.84px;font-size:12px;line-height:12px;color:#000;font-weight:normal;font-style:normal;"><i class="w7">F</i><i class="w7">1</i></div>
<div class="t" style="right:825px;top:289.84px;font-size:12px;line-height:12px;color:#000;font-weight:normal;font-style:normal;"><i class="w6">z</i><i class="w7">o</i><i class="w7">o</i><i class="w10">m</i><i class="w4">(</i><i class="w9">C</i><i class="w7">1</i><i class="w4">)</i></div>
<div class="t" style="right:825px;top:306.84px;font-size:12px;line-height:12px;color:#f0f0f0;font-weight:normal;font-style:normal;"><i class="w7">4</i><i class="w7">1</i><i class="w7">0</i><i class="w3">&nbsp;</i><i class="w10">m</i><i class="w8">V</i><i class="w3">/</i><i class="w7">d</i><i class="w3">i</i><i class="w6">v</i></div>
<div class="t" style="right:825px;top:321.84px;font-size:12px;line-height:12px;color:#f0f0f0;font-weight:normal;font-style:normal;"><i class="w7">3</i><i class="w7">3</i><i class="w3">.</i><i class="w7">0</i><i class="w3">&nbsp;</i><i class="w7">n</i><i class="w6">s</i><i class="w3">/</i><i class="w7">d</i><i class="w3">i</i><i class="w6">v</i></div>
<div class="a" style="left:807px;top:288px;width:112px;height:49px;background:#444"></div>
<div class="a" style="left:808px;top:289px;width:110px;height:14px;background:#f6f2f6"></div>
<div class="t" style="left:810px;top:289.84px;font-size:12px;line-height:12px;color:#000;font-weight:normal;font-style:normal;"><i class="w7">T</i><i class="w3">i</i><i class="w10">m</i><i class="w7">e</i><i class="w7">b</i><i class="w7">a</i><i class="w6">s</i><i class="w7">e</i></div>
<div class="t" style="right:107px;top:289.84px;font-size:12px;line-height:12px;color:#000;font-weight:normal;font-style:normal;"><i class="w7">0</i><i class="w3">&nbsp;</i><i class="w7">n</i><i class="w6">s</i></div>
<div class="t" style="right:107px;top:306.84px;font-size:12px;line-height:12px;color:#f0f0f0;font-weight:normal;font-style:normal;"><i class="w7">1</i><i class="w7">0</i><i class="w7">0</i><i class="w3">&nbsp;</i><i class="w7">n</i><i class="w6">s</i><i class="w3">/</i><i class="w7">d</i><i class="w3">i</i><i class="w6">v</i></div>
<div class="t" style="left:810px;top:321.84px;font-size:12px;line-height:12px;color:#f0f0f0;font-weight:normal;font-style:normal;"><i class="w7">4</i><i class="w3">.</i><i class="w7">0</i><i class="w7">0</i><i class="w3">&nbsp;</i><i class="w6">k</i><i class="w8">S</i></div>
<div class="t" style="right:107px;top:321.84px;font-size:12px;line-height:12px;color:#f0f0f0;font-weight:normal;font-style:normal;"><i class="w7">4</i><i class="w3">.</i><i class="w7">0</i><i class="w7">0</i><i class="w3">&nbsp;</i><i class="w9">G</i><i class="w8">S</i><i class="w3">/</i><i class="w6">s</i></div>
<div class="a" style="left:922px;top:288px;width:97px;height:49px;background:#444"></div>
<div class="a" style="left:923px;top:289px;width:95px;height:14px;background:#f6f2f6"></div>
<div class="t" style="left:926px;top:289.84px;font-size:12px;line-height:12px;color:#000;font-weight:normal;font-style:normal;"><i class="w7">T</i><i class="w4">r</i><i class="w3">i</i><i class="w7">g</i><i class="w7">g</i><i class="w7">e</i><i class="w4">r</i></div>
<div class="a" style="left:983px;top:289px;width:16px;height:13px;background:#000;border-radius:3px"></div>
<div class="a" style="left:1000px;top:289px;width:18px;height:13px;background:#000;border-radius:3px"></div>
<div class="t" style="left:984.5px;top:291.04px;font-size:10px;line-height:10px;color:#f0f0f0;font-weight:normal;font-style:normal;"><i class="w7">C</i><i class="w6">1</i></div>
<div class="t" style="left:1001.5px;top:291.04px;font-size:10px;line-height:10px;color:#f0f0f0;font-weight:normal;font-style:normal;"><i class="w7">D</i><i class="w7">C</i></div>
<div class="t" style="left:925.5px;top:306.84px;font-size:12px;line-height:12px;color:#f0f0f0;font-weight:normal;font-style:normal;"><i class="w8">S</i><i class="w3">t</i><i class="w7">o</i><i class="w7">p</i></div>
<div class="t" style="right:7px;top:306.84px;font-size:12px;line-height:12px;color:#f0f0f0;font-weight:normal;font-style:normal;"><i class="w7">1</i><i class="w3">.</i><i class="w7">2</i><i class="w7">1</i><i class="w7">5</i><i class="w3">&nbsp;</i><i class="w8">V</i></div>
<div class="t" style="left:925.5px;top:321.84px;font-size:12px;line-height:12px;color:#f0f0f0;font-weight:normal;font-style:normal;"><i class="w8">E</i><i class="w7">d</i><i class="w7">g</i><i class="w7">e</i></div>
<div class="t" style="right:7px;top:321.84px;font-size:12px;line-height:12px;color:#f0f0f0;font-weight:normal;font-style:normal;"><i class="w8">P</i><i class="w7">o</i><i class="w6">s</i><i class="w3">i</i><i class="w3">t</i><i class="w3">i</i><i class="w6">v</i><i class="w7">e</i></div>
<div class="t" style="left:808px;top:338.34px;font-size:12px;line-height:12px;color:#f0f0f0;font-weight:normal;font-style:normal;"><i class="w8">X</i><i class="w7">1</i><i class="w7">=</i><i class="w3">&nbsp;</i><i class="w4">-</i><i class="w7">1</i><i class="w7">6</i><i class="w7">6</i><i class="w3">&nbsp;</i><i class="w7">n</i><i class="w6">s</i></div>
<div class="t" style="left:878px;top:338.34px;font-size:12px;line-height:12px;color:#f0f0f0;font-weight:normal;font-style:normal;"><i class="w8">Δ</i><i class="w8">X</i><i class="w7">=</i></div>
<div class="t" style="left:916px;top:338.34px;font-size:12px;line-height:12px;color:#f0f0f0;font-weight:normal;font-style:normal;"><i class="w7">3</i><i class="w7">3</i><i class="w7">3</i><i class="w3">&nbsp;</i><i class="w7">n</i><i class="w6">s</i></div>
<div class="t" style="left:808px;top:354.34px;font-size:12px;line-height:12px;color:#f0f0f0;font-weight:normal;font-style:normal;"><i class="w8">X</i><i class="w7">2</i><i class="w7">=</i><i class="w3">&nbsp;</i><i class="w7">1</i><i class="w7">6</i><i class="w7">7</i><i class="w3">&nbsp;</i><i class="w7">n</i><i class="w6">s</i></div>
<div class="t" style="left:879px;top:354.34px;font-size:12px;line-height:12px;color:#f0f0f0;font-weight:normal;font-style:normal;"><i class="w7">1</i><i class="w3">/</i><i class="w8">Δ</i><i class="w8">X</i><i class="w7">=</i></div>
<div class="t" style="left:916px;top:354.34px;font-size:12px;line-height:12px;color:#f0f0f0;font-weight:normal;font-style:normal;"><i class="w7">3</i><i class="w3">.</i><i class="w7">0</i><i class="w7">0</i><i class="w7">3</i><i class="w3">&nbsp;</i><i class="w10">M</i><i class="w9">H</i><i class="w6">z</i></div>
<div class="a" style="left:0;top:375px;width:1024px;height:1px;background:#505050"></div>
<div class="a" style="left:0;top:376px;width:1024px;height:31px;background:#2f2f2f"></div>
<div class="a" style="left:7px;top:386px;width:103px;height:21px;background:linear-gradient(#2f3134 0%,#263c52 35%,#1c5590 70%,#1a6cc0 100%)"></div>
<div class="a" style="left:110px;top:380px;width:1px;height:23px;background:#111"></div>
<div class="a" style="left:111px;top:380px;width:1px;height:23px;background:#555"></div>
<div class="t" style="left:24px;top:385.84px;font-size:12px;line-height:12px;color:#f0f0f0;font-weight:normal;font-style:normal;"><i class="w11">W</i><i class="w7">a</i><i class="w6">v</i><i class="w7">e</i><i class="w8">S</i><i class="w7">o</i><i class="w7">u</i><i class="w4">r</i><i class="w6">c</i><i class="w7">e</i></div>
<div class="a" style="left:0;top:407px;width:1024px;height:1px;background:#1a80e0"></div>
<div class="a" style="left:0;top:408px;width:1024px;height:175px;background:#202020"></div>
<div class="a" style="left:0;top:583px;width:1024px;height:1px;background:#55526a"></div>
<div class="a" style="left:0;top:584px;width:1024px;height:16px;background:#1e1e1e"></div>
<svg class="a" style="left:966px;top:383px" width="18" height="18"><circle cx="8.5" cy="8.5" r="7.5" fill="#f4f4f4"/><path d="M5.5 5.5l6 6M11.5 5.5l-6 6" stroke="#222" stroke-width="2"/></svg>
<div class="t" style="left:990px;top:386.19px;font-size:11px;line-height:11px;color:#f0f0f0;font-weight:bold;font-style:normal;transform:scaleX(0.83);transform-origin:0 0;">CLOSE</div>
<div class="t" style="left:33px;top:412.84px;font-size:12px;line-height:12px;color:#4a9ae8;font-weight:bold;font-style:normal;"><i class="w11">W</i><i class="w7">a</i><i class="w7">v</i><i class="w7">e</i><i class="w8">S</i><i class="w7">o</i><i class="w7">u</i><i class="w5">r</i><i class="w7">c</i><i class="w7">e</i></div>
<div class="t" style="left:228px;top:412.84px;font-size:12px;line-height:12px;color:#4a9ae8;font-weight:bold;font-style:normal;"><i class="w11">W</i><i class="w7">a</i><i class="w7">v</i><i class="w7">e</i><i class="w4">f</i><i class="w7">o</i><i class="w5">r</i><i class="w11">m</i></div>
<div class="t" style="left:614.5px;top:412.84px;font-size:12px;line-height:12px;color:#4a9ae8;font-weight:bold;font-style:normal;"><i class="w8">S</i><i class="w7">e</i><i class="w4">t</i><i class="w4">t</i><i class="w3">i</i><i class="w7">n</i><i class="w7">g</i><i class="w7">s</i></div>
<div class="t" style="left:944px;top:412.84px;font-size:12px;line-height:12px;color:#4a9ae8;font-weight:bold;font-style:normal;"><i class="w9">U</i><i class="w4">t</i><i class="w3">i</i><i class="w3">l</i><i class="w3">i</i><i class="w4">t</i><i class="w3">i</i><i class="w7">e</i><i class="w7">s</i></div>
<div class="a" style="left:135px;top:430px;width:1px;height:138px;background:#555"></div>
<div class="a" style="left:372px;top:434px;width:1px;height:137px;background:#555"></div>
<div class="a" style="left:904px;top:430px;width:1px;height:138px;background:#555"></div>
<div class="t" style="left:48px;top:459.84px;font-size:12px;line-height:12px;color:#c0cad8;font-weight:normal;font-style:italic;"><i class="w8">E</i><i class="w7">n</i><i class="w7">a</i><i class="w7">b</i><i class="w3">l</i><i class="w7">e</i></div>
<div class="a" style="left:59px;top:480px;width:16px;height:16px;background:#f4f0f4"></div>
<svg class="a" style="left:59px;top:480px" width="16" height="16"><path d="M2 7.2 L6.8 12.6 L14 3.2" fill="none" stroke="#1a6ad0" stroke-width="2.7"/></svg>
<svg class="a" style="left:30px;top:490px" width="80" height="14" shape-rendering="crispEdges"><path d="M4 5h1v5h4v1h-5zM71 5h1v6h-5v-1h4z" fill="#8a8a8a"/></svg>
<div class="t" style="left:53px;top:511.84px;font-size:12px;line-height:12px;color:#c0cad8;font-weight:normal;font-style:italic;"><i class="w7">L</i><i class="w7">o</i><i class="w7">a</i><i class="w7">d</i></div>
<div class="t" style="left:40px;top:530.34px;font-size:12px;line-height:12px;color:#f4f4f4;font-weight:normal;font-style:normal;"><i class="w9">H</i><i class="w3">i</i><i class="w7">Z</i></div>
<div class="a" style="left:36px;top:548px;width:66px;height:1px;background:#8a8a8a"></div><div class="a" style="left:36px;top:542px;width:1px;height:6px;background:#8a8a8a"></div><svg class="a" style="left:94px;top:540px" width="8" height="8"><path d="M1 7 L7 1 L7 7 Z" fill="#8a8a8a"/></svg>
<div class="a" style="left:158px;top:466px;width:43px;height:39px;background:#3d4a4b;border:2px solid #5a5a5a"></div>
<div class="t" style="left:140px;width:80px;text-align:center;top:452.84px;font-size:12px;line-height:12px;color:#c0cad8;font-weight:normal;font-style:italic;"><i class="w8">S</i><i class="w3">i</i><i class="w7">n</i><i class="w7">e</i></div>
<div class="a" style="left:209px;top:466px;width:43px;height:39px;background:#3d4a4b;border:2px solid #5a5a5a"></div>
<div class="t" style="left:191px;width:80px;text-align:center;top:452.84px;font-size:12px;line-height:12px;color:#c0cad8;font-weight:normal;font-style:italic;"><i class="w8">S</i><i class="w7">q</i><i class="w7">u</i><i class="w7">a</i><i class="w4">r</i><i class="w7">e</i></div>
<div class="a" style="left:260px;top:466px;width:43px;height:39px;background:#3d4a4b;border:2px solid #5a5a5a"></div>
<div class="t" style="left:242px;width:80px;text-align:center;top:452.84px;font-size:12px;line-height:12px;color:#c0cad8;font-weight:normal;font-style:italic;"><i class="w7">T</i><i class="w4">r</i><i class="w3">i</i><i class="w7">a</i><i class="w7">n</i><i class="w7">g</i><i class="w3">l</i><i class="w7">e</i></div>
<div class="a" style="left:311px;top:466px;width:43px;height:39px;background:#3d4a4b;border:2px solid #5a5a5a"></div>
<div class="t" style="left:293px;width:80px;text-align:center;top:452.84px;font-size:12px;line-height:12px;color:#c0cad8;font-weight:normal;font-style:italic;"><i class="w8">P</i><i class="w7">u</i><i class="w3">l</i><i class="w6">s</i><i class="w7">e</i></div>
<div class="t" style="left:140px;width:80px;text-align:center;top:511.34px;font-size:12px;line-height:12px;color:#c0cad8;font-weight:normal;font-style:italic;"><i class="w9">D</i><i class="w9">C</i></div>
<div class="t" style="left:191px;width:80px;text-align:center;top:511.34px;font-size:12px;line-height:12px;color:#c0cad8;font-weight:normal;font-style:italic;"><i class="w9">N</i><i class="w7">o</i><i class="w3">i</i><i class="w6">s</i><i class="w7">e</i></div>
<div class="t" style="left:242px;width:80px;text-align:center;top:511.34px;font-size:12px;line-height:12px;color:#c0cad8;font-weight:normal;font-style:italic;"><i class="w8">A</i><i class="w9">R</i><i class="w8">B</i></div>
<div class="a" style="left:158px;top:525px;width:43px;height:39px;background:#3d4a4b;border:2px solid #5a5a5a"></div>
<div class="a" style="left:209px;top:525px;width:43px;height:39px;background:#3d4a4b;border:2px solid #5a5a5a"></div>
<div class="a" style="left:260px;top:525px;width:43px;height:39px;background:#21405f;border:2px solid #4a8ad8"></div>
<div class="t" style="left:260px;width:43px;text-align:center;top:538.84px;font-size:12px;line-height:12px;color:#f4f4f4;font-weight:normal;font-style:normal;"><i class="w8">A</i><i class="w9">R</i><i class="w8">B</i></div>
<svg class="a" style="left:0;top:440px" width="380" height="140"><g fill="none" stroke="#f0e800" stroke-width="1.3" stroke-linejoin="bevel">
<path d="M163.0 47.27 L163.5 46.29 L164.0 45.30 L164.5 44.31 L165.0 43.33 L165.5 42.37 L166.0 41.44 L166.5 40.55 L167.0 39.70 L167.5 38.90 L168.0 38.16 L168.5 37.49 L169.0 36.89 L169.5 36.37 L170.0 35.93 L170.5 35.59 L171.0 35.33 L171.5 35.17 L172.0 35.10 L172.5 35.13 L173.0 35.25 L173.5 35.47 L174.0 35.78 L174.5 36.18 L175.0 36.67 L175.5 37.24 L176.0 37.88 L176.5 38.59 L177.0 39.37 L177.5 40.20 L178.0 41.08 L178.5 42.00 L179.0 42.95 L179.5 43.92 L180.0 44.90 L180.5 45.89 L181.0 46.88 L181.5 47.84 L182.0 48.79 L182.5 49.70 L183.0 50.57 L183.5 51.39 L184.0 52.15 L184.5 52.85 L185.0 53.48 L185.5 54.03 L186.0 54.50 L186.5 54.88 L187.0 55.18 L187.5 55.38 L188.0 55.48 L188.5 55.49 L189.0 55.41 L189.5 55.23 L190.0 54.95 L190.5 54.59 L191.0 54.13 L191.5 53.60 L192.0 52.99 L192.5 52.30 L193.0 51.55 L193.5 50.74 L194.0 49.88 L194.5 48.97 L195.0 48.04 L195.5 47.07 L196.0 46.09 L196.5 45.10"/>
<path d="M214.5 55.5 H222.5 V35.5 H230.5 V55.5 H238.5 V35.5 H247"/>
<path d="M266 45.8 L270.4 35.5 L278.7 55.5 L286.3 35.5 L294.7 55.5 L299 44"/>
<path d="M316.8 55.5 H324.8 V35.5 H330.8 V55.5 H348"/>
</g>
<g fill="#f0e800" shape-rendering="crispEdges">
<path d="M165,108h31v1h-31z"/>
<path d="M214,107h34v1h-34zM216,105h1v5h-1zM218,104h1v5h-1zM220,106h1v4h-1zM222,104h1v7h-1zM224,106h1v4h-1zM226,105h1v4h-1zM228,106h1v6h-1zM230,105h1v4h-1zM232,106h1v5h-1zM234,104h1v5h-1zM236,105h1v5h-1zM238,106h1v5h-1zM240,104h1v5h-1zM242,105h1v6h-1zM244,106h1v5h-1zM246,105h1v5h-1z"/>
</g>
</svg>
<div class="a" style="left:391px;top:434px;width:49px;height:39px;background:#21405f;border:2px solid #4a8ad8"></div>
<div class="a" style="left:448px;top:434px;width:49px;height:39px;background:#3d4a4b;border:2px solid #5a5a5a"></div>
<div class="a" style="left:391px;top:510px;width:49px;height:39px;background:#21405f;border:2px solid #4a8ad8"></div>
<div class="a" style="left:448px;top:510px;width:49px;height:39px;background:#3d4a4b;border:2px solid #5a5a5a"></div>
<div class="t" style="left:391px;width:49px;text-align:center;top:447.84px;font-size:12px;line-height:12px;color:#f4f4f4;font-weight:normal;font-style:normal;"><i class="w7">F</i><i class="w4">r</i><i class="w7">e</i><i class="w7">q</i></div>
<div class="t" style="left:449.5px;width:49px;text-align:center;top:447.84px;font-size:12px;line-height:12px;color:#f4f4f4;font-weight:normal;font-style:normal;"><i class="w8">P</i><i class="w7">e</i><i class="w4">r</i><i class="w3">i</i><i class="w7">o</i><i class="w7">d</i></div>
<div class="t" style="left:391px;width:49px;text-align:center;top:523.84px;font-size:12px;line-height:12px;color:#f4f4f4;font-weight:normal;font-style:normal;"><i class="w8">A</i><i class="w10">m</i><i class="w7">p</i><i class="w3">l</i></div>
<div class="t" style="left:449.5px;width:49px;text-align:center;top:523.84px;font-size:12px;line-height:12px;color:#f4f4f4;font-weight:normal;font-style:normal;"><i class="w7">L</i><i class="w7">e</i><i class="w6">v</i><i class="w7">e</i><i class="w3">l</i></div>
<div class="t" style="left:505px;width:123px;text-align:center;top:431.34px;font-size:12px;line-height:12px;color:#c0cad8;font-weight:normal;font-style:italic;"><i class="w7">F</i><i class="w4">r</i><i class="w7">e</i><i class="w7">q</i><i class="w7">u</i><i class="w7">e</i><i class="w7">n</i><i class="w6">c</i><i class="w6">y</i></div>
<div class="t" style="left:505px;width:123px;text-align:center;top:480.84px;font-size:12px;line-height:12px;color:#c0cad8;font-weight:normal;font-style:italic;"><i class="w8">A</i><i class="w10">m</i><i class="w7">p</i><i class="w3">l</i><i class="w3">i</i><i class="w3">t</i><i class="w7">u</i><i class="w7">d</i><i class="w7">e</i></div>
<div class="t" style="left:505px;width:123px;text-align:center;top:530.84px;font-size:12px;line-height:12px;color:#c0cad8;font-weight:normal;font-style:italic;"><i class="w9">O</i><i class="w3">f</i><i class="w3">f</i><i class="w6">s</i><i class="w7">e</i><i class="w3">t</i></div>
<div class="t" style="left:511px;top:450.34px;font-size:12px;line-height:12px;color:#f4f4f4;font-weight:normal;font-style:normal;"><i class="w7">1</i><i class="w3">.</i><i class="w7">0</i><i class="w7">0</i><i class="w7">0</i><i class="w7">0</i><i class="w7">0</i><i class="w7">0</i><i class="w7">0</i><i class="w7">0</i><i class="w7">0</i><i class="w3">&nbsp;</i><i class="w6">k</i><i class="w9">H</i><i class="w6">z</i></div>
<div class="t" style="left:511px;top:500.84px;font-size:12px;line-height:12px;color:#f4f4f4;font-weight:normal;font-style:normal;"><i class="w7">1</i><i class="w7">0</i><i class="w7">0</i><i class="w3">&nbsp;</i><i class="w10">m</i><i class="w8">V</i></div>
<div class="t" style="left:511px;top:550.34px;font-size:12px;line-height:12px;color:#f4f4f4;font-weight:normal;font-style:normal;"><i class="w7">0</i><i class="w3">&nbsp;</i><i class="w10">m</i><i class="w8">V</i></div>
<div class="a" style="left:507px;top:468px;width:123px;height:1px;background:#8a8a8a"></div><div class="a" style="left:507px;top:462px;width:1px;height:6px;background:#8a8a8a"></div><svg class="a" style="left:622px;top:460px" width="8" height="8"><path d="M1 7 L7 1 L7 7 Z" fill="#8a8a8a"/></svg>
<div class="a" style="left:507px;top:519px;width:123px;height:1px;background:#8a8a8a"></div><div class="a" style="left:507px;top:513px;width:1px;height:6px;background:#8a8a8a"></div><svg class="a" style="left:622px;top:511px" width="8" height="8"><path d="M1 7 L7 1 L7 7 Z" fill="#8a8a8a"/></svg>
<div class="a" style="left:507px;top:569px;width:123px;height:1px;background:#8a8a8a"></div><div class="a" style="left:507px;top:563px;width:1px;height:6px;background:#8a8a8a"></div><svg class="a" style="left:622px;top:561px" width="8" height="8"><path d="M1 7 L7 1 L7 7 Z" fill="#8a8a8a"/></svg>
<div class="a" style="left:652px;top:464px;width:188px;height:24px;overflow:hidden"><div class="t" style="left:2px;top:5.34px;font-size:12px;line-height:12px;color:#f4f4f4;font-weight:normal;font-style:normal;letter-spacing:0.2px;"><i class="w5" style="transform:scaleX(1.6);transform-origin:0 0">\</i><i class="w8">S</i><i class="w3">t</i><i class="w7">o</i><i class="w4">r</i><i class="w7">a</i><i class="w7">g</i><i class="w7">e</i><i class="w3">&nbsp;</i><i class="w9">C</i><i class="w7">a</i><i class="w4">r</i><i class="w7">d</i><i class="w5" style="transform:scaleX(1.6);transform-origin:0 0">\</i><i class="w7">F</i><i class="w7">1</i><i class="w9">C</i><i class="w7">a</i><i class="w4">r</i><i class="w7">d</i><i class="w3">i</i><i class="w7">a</i><i class="w6">c</i><i class="w7">0</i><i class="w7">0</i><i class="w7">0</i><i class="w7">0</i><i class="w7">0</i><i class="w3">.</i><i class="w6">c</i><i class="w6">s</i><i class="w6">v</i></div></div>
<div class="a" style="left:652px;top:491px;width:190px;height:1px;background:#8a8a8a"></div>
<div class="a" style="left:652px;top:485px;width:1px;height:6px;background:#8a8a8a"></div>
<div class="a" style="left:840px;top:484px;width:1px;height:6px;background:#8a8a8a"></div>
<div class="a" style="left:843px;top:464px;width:45px;height:27px;background:#3d4a4b;border:2px solid #5a5a5a"></div>
<div class="t" style="left:843px;width:45px;text-align:center;top:471.84px;font-size:12px;line-height:12px;color:#f4f4f4;font-weight:normal;font-style:normal;"><i class="w8">B</i><i class="w4">r</i><i class="w7">o</i><i class="w9">w</i><i class="w6">s</i><i class="w7">e</i></div>
<div class="a" style="left:716px;top:512px;width:114px;height:31px;background:#3d4a4b;border:2px solid #5a5a5a"></div>
<div class="t" style="left:716px;width:114px;text-align:center;top:521.84px;font-size:12px;line-height:12px;color:#f4f4f4;font-weight:normal;font-style:normal;"><i class="w9">U</i><i class="w7">p</i><i class="w3">l</i><i class="w7">o</i><i class="w7">a</i><i class="w7">d</i></div>
<div class="a" style="left:923px;top:460px;width:83px;height:39px;background:#3d4a4b;border:2px solid #5a5a5a"></div>
<div class="a" style="left:923px;top:510px;width:83px;height:39px;background:#3d4a4b;border:2px solid #5a5a5a"></div>
<div class="t" style="left:923px;width:83px;text-align:center;top:473.84px;font-size:12px;line-height:12px;color:#f4f4f4;font-weight:normal;font-style:normal;"><i class="w9">D</i><i class="w7">e</i><i class="w3">f</i><i class="w7">a</i><i class="w7">u</i><i class="w3">l</i><i class="w3">t</i><i class="w3">&nbsp;</i><i class="w8">S</i><i class="w7">e</i><i class="w3">t</i><i class="w7">u</i><i class="w7">p</i></div>
<div class="t" style="left:923px;width:83px;text-align:center;top:524.84px;font-size:12px;line-height:12px;color:#f4f4f4;font-weight:normal;font-style:normal;"><i class="w9">C</i><i class="w7">a</i><i class="w3">l</i><i class="w3">i</i><i class="w7">b</i><i class="w4">r</i><i class="w7">a</i><i class="w3">t</i><i class="w7">e</i></div>
<div class="t" style="left:6.5px;top:585.10px;font-size:15px;line-height:15px;color:#f0f0f0;font-weight:bold;font-style:normal;transform:scaleX(0.815);transform-origin:0 0;">TELEDYNE</div>
<div class="t" style="left:77.8px;top:585.10px;font-size:15px;line-height:15px;color:#e0e0e0;font-weight:normal;font-style:normal;transform:scaleX(0.73);transform-origin:0 0;">LECROY</div>
<div class="t" style="right:16px;top:585.84px;font-size:12px;line-height:12px;color:#f0f0f0;font-weight:normal;font-style:normal;">2/17/2016 12:14:59 AM</div>
</body></html>
